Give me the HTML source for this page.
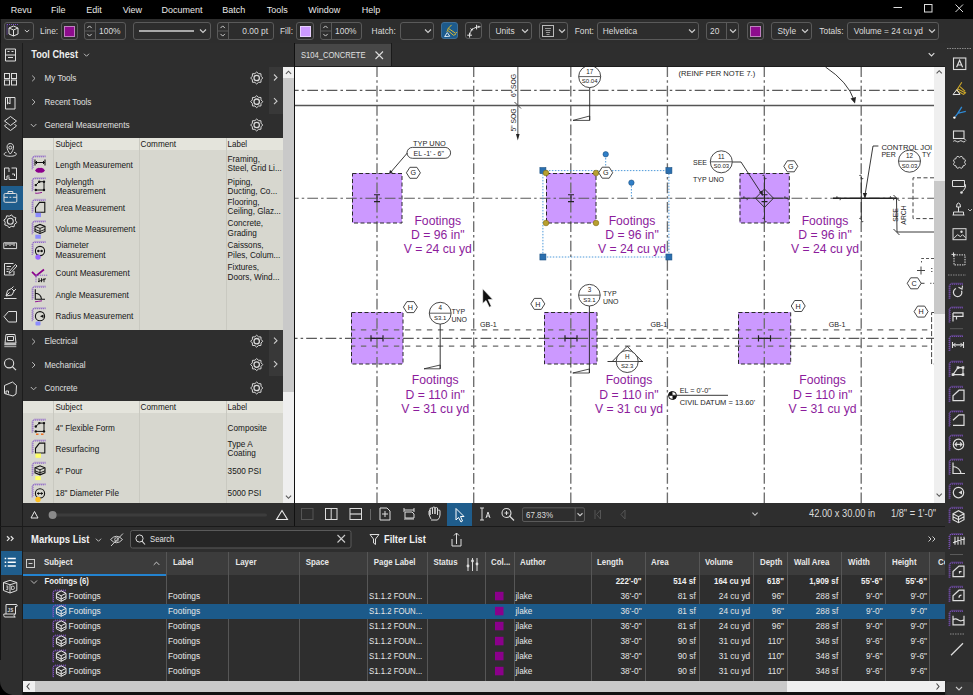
<!DOCTYPE html><html><head><meta charset="utf-8"><style>
*{margin:0;padding:0;box-sizing:border-box}
html,body{width:973px;height:695px;overflow:hidden;background:#000;font-family:"Liberation Sans",sans-serif}
.a{position:absolute}
.t{position:absolute;white-space:nowrap;line-height:1}
svg{overflow:visible}
</style></head><body>
<div class="a" style="left:0px;top:0px;width:973px;height:19px;background:#000;"></div>
<svg class="a" style="left:880px;top:0px;" width="93" height="19" viewBox="880 0 93 19"><path d="M893.5 7.5H902" stroke="#ddd" stroke-width="1"/><rect x="924.5" y="4.5" width="7.5" height="7.5" fill="none" stroke="#ddd" stroke-width="1"/><path d="M955.5 4.5L963 12M963 4.5L955.5 12" stroke="#ddd" stroke-width="1"/></svg>
<div class="a" style="left:0px;top:19px;width:973px;height:24px;background:#2d2d2d;"></div>
<div class="a" style="left:0px;top:19px;width:1px;height:24px;background:#111;"></div>
<div class="a" style="left:3.5px;top:22px;width:30.0px;height:18px;border:1px solid #5a5a5a;background:transparent;border-radius:3px;"></div>
<svg class="a" style="left:5px;top:22px;" width="28" height="18" viewBox="5 22 28 18"><path d="M7 24.5V35M7 24.5H19" stroke="#7b4fc9" stroke-width="1" stroke-dasharray="1 1"/><path d="M9 28L13.5 26L18 28V34L13.5 36L9 34Z M9 28L13.5 30L18 28 M13.5 30V36" fill="none" stroke="#e0e0e0" stroke-width="1"/><path d="M24.8 29.9L27 32.1L29.2 29.9" fill="none" stroke="#d0d0d0" stroke-width="1"/></svg>
<div class="a" style="left:60.5px;top:22px;width:17.0px;height:18px;border:1px solid #5a5a5a;background:transparent;border-radius:3px;"></div>
<div class="a" style="left:64.5px;top:26.5px;width:9px;height:9px;background:#8e0c8e;outline:1px solid #c080c0"></div>
<div class="a" style="left:84px;top:22px;width:42px;height:18px;border:1px solid #5a5a5a;background:transparent;border-radius:3px;"></div>
<div class="a" style="left:95px;top:22px;width:1px;height:18px;background:#5a5a5a;"></div>
<svg class="a" style="left:84px;top:22px;" width="11" height="18" viewBox="84 22 11 18"><path d="M87.3 28.1L89.5 25.9L91.7 28.1" fill="none" stroke="#ccc" stroke-width="1"/><path d="M87.3 33.9L89.5 36.1L91.7 33.9" fill="none" stroke="#ccc" stroke-width="1"/><path d="M84 31H95" stroke="#5a5a5a"/></svg>
<div class="a" style="left:133px;top:22px;width:77.6px;height:18px;border:1px solid #5a5a5a;background:transparent;border-radius:3px;"></div>
<div class="a" style="left:139px;top:30px;width:55px;height:2px;background:#a8a8a8;"></div>
<svg class="a" style="left:195px;top:22px;" width="15" height="18" viewBox="195 22 15 18"><path d="M200 29.5L203 32.5L206 29.5" fill="none" stroke="#d0d0d0" stroke-width="1.1"/></svg>
<div class="a" style="left:217px;top:22px;width:56.60000000000002px;height:18px;border:1px solid #5a5a5a;background:transparent;border-radius:3px;"></div>
<div class="a" style="left:228.4px;top:22px;width:1px;height:18px;background:#5a5a5a;"></div>
<svg class="a" style="left:217px;top:22px;" width="11.400000000000006" height="18" viewBox="217 22 11.400000000000006 18"><path d="M220.5 28.1L222.7 25.9L224.89999999999998 28.1" fill="none" stroke="#ccc" stroke-width="1"/><path d="M220.5 33.9L222.7 36.1L224.89999999999998 33.9" fill="none" stroke="#ccc" stroke-width="1"/><path d="M217 31H228.4" stroke="#5a5a5a"/></svg>
<div class="a" style="left:296.4px;top:22px;width:17.30000000000001px;height:18px;border:1px solid #5a5a5a;background:transparent;border-radius:3px;"></div>
<div class="a" style="left:300.5px;top:26.5px;width:9px;height:9px;background:#cc99ff;outline:1px solid #e8d0ff"></div>
<div class="a" style="left:320.3px;top:22px;width:41.39999999999998px;height:18px;border:1px solid #5a5a5a;background:transparent;border-radius:3px;"></div>
<div class="a" style="left:331.3px;top:22px;width:1px;height:18px;background:#5a5a5a;"></div>
<svg class="a" style="left:320.3px;top:22px;" width="11.0" height="18" viewBox="320.3 22 11.0 18"><path d="M323.6 28.1L325.8 25.9L328.0 28.1" fill="none" stroke="#ccc" stroke-width="1"/><path d="M323.6 33.9L325.8 36.1L328.0 33.9" fill="none" stroke="#ccc" stroke-width="1"/><path d="M320.3 31H331.3" stroke="#5a5a5a"/></svg>
<div class="a" style="left:399.6px;top:22px;width:34.69999999999999px;height:18px;border:1px solid #5a5a5a;background:transparent;border-radius:3px;"></div>
<svg class="a" style="left:420px;top:22px;" width="14" height="18" viewBox="420 22 14 18"><path d="M425 29.5L428 32.5L431 29.5" fill="none" stroke="#d0d0d0" stroke-width="1.1"/></svg>
<div class="a" style="left:441.2px;top:22.2px;width:17.0px;height:17.2px;border:1px solid #3f6f98;background:#1c5a8c;border-radius:3px;"></div>
<svg class="a" style="left:441px;top:22px;" width="17" height="18" viewBox="441 22 17 18"><path d="M451.6 24.9L448.3 28.3L447.6 30.3L453.5 35.3L455.8 34.3 M448.3 28.3L455.6 33.3L457 32.2 M447.6 30.3L446.8 31.8" fill="none" stroke="#d9b834" stroke-width="1"/><path d="M444.6 36.6L447.3 32.6L449.8 36.2Z" fill="none" stroke="#d8e8f5" stroke-width="1"/></svg>
<div class="a" style="left:465.1px;top:22.2px;width:16.799999999999955px;height:17.2px;border:1px solid #5a5a5a;background:transparent;border-radius:3px;"></div>
<svg class="a" style="left:465px;top:22px;" width="17" height="18" viewBox="465 22 17 18"><path d="M469.6 35.2Q470.3 29.2 476.5 27.1L480.5 26.7" fill="none" stroke="#dcdcdc" stroke-width="1"/><path d="M467.2 35.2H472 M469.6 32.8V37.6 M470.6 28.4L472.6 30.4 M472.6 28.4L470.6 30.4 M476.6 24.8V29.4 M478.8 25.8V27.8" stroke="#e8e8e8" stroke-width="1"/></svg>
<div class="a" style="left:488.9px;top:22px;width:42.700000000000045px;height:18px;border:1px solid #5a5a5a;background:transparent;border-radius:3px;"></div>
<svg class="a" style="left:518px;top:22px;" width="14" height="18" viewBox="518 22 14 18"><path d="M522 29.5L525 32.5L528 29.5" fill="none" stroke="#d0d0d0" stroke-width="1.1"/></svg>
<div class="a" style="left:538.5px;top:22px;width:29.700000000000045px;height:18px;border:1px solid #5a5a5a;background:transparent;border-radius:3px;"></div>
<svg class="a" style="left:538px;top:22px;" width="30" height="18" viewBox="538 22 30 18"><rect x="542.5" y="25.5" width="11" height="11" fill="none" stroke="#bbb" stroke-width="1"/><path d="M545 28.5H551M545.5 30.5H550.5M546 32.5H550M546.5 34.5H549.5" stroke="#999" stroke-width="1.2"/><path d="M559 29.5L562 32.5L565 29.5" fill="none" stroke="#d0d0d0" stroke-width="1.1"/></svg>
<div class="a" style="left:597.3px;top:22px;width:101.40000000000009px;height:18px;border:1px solid #5a5a5a;background:transparent;border-radius:3px;"></div>
<svg class="a" style="left:685px;top:22px;" width="14" height="18" viewBox="685 22 14 18"><path d="M689 29.5L692 32.5L695 29.5" fill="none" stroke="#d0d0d0" stroke-width="1.1"/></svg>
<div class="a" style="left:706.3px;top:22px;width:33.200000000000045px;height:18px;border:1px solid #5a5a5a;background:transparent;border-radius:3px;"></div>
<div class="a" style="left:726.4px;top:22px;width:1px;height:18px;background:#5a5a5a;"></div>
<svg class="a" style="left:726px;top:22px;" width="14" height="18" viewBox="726 22 14 18"><path d="M730 29.5L733 32.5L736 29.5" fill="none" stroke="#d0d0d0" stroke-width="1.1"/></svg>
<div class="a" style="left:747.3px;top:22px;width:16.700000000000045px;height:18px;border:1px solid #5a5a5a;background:transparent;border-radius:3px;"></div>
<div class="a" style="left:751.2px;top:26.5px;width:9px;height:9px;background:#8e0c8e;outline:1px solid #c080c0"></div>
<div class="a" style="left:770.8px;top:22px;width:41.10000000000002px;height:18px;border:1px solid #5a5a5a;background:transparent;border-radius:3px;"></div>
<svg class="a" style="left:798px;top:22px;" width="14" height="18" viewBox="798 22 14 18"><path d="M802 29.5L805 32.5L808 29.5" fill="none" stroke="#d0d0d0" stroke-width="1.1"/></svg>
<div class="a" style="left:847px;top:22px;width:92.29999999999995px;height:18px;border:1px solid #5a5a5a;background:transparent;border-radius:3px;"></div>
<svg class="a" style="left:925px;top:22px;" width="14" height="18" viewBox="925 22 14 18"><path d="M929 29.5L932 32.5L935 29.5" fill="none" stroke="#d0d0d0" stroke-width="1.1"/></svg>
<div class="a" style="left:0px;top:43px;width:973px;height:1px;background:#141414;"></div>
<div class="a" style="left:23px;top:43px;width:272px;height:483px;background:#2e2e2e;"></div>
<div class="a" style="left:22px;top:43px;width:1px;height:652px;background:#1c1c1c;"></div>
<div class="a" style="left:294px;top:43px;width:1px;height:483px;background:#111;"></div>
<div class="a" style="left:269px;top:67px;width:14px;height:46.6px;background:#383838;"></div>
<div class="a" style="left:269px;top:330px;width:14px;height:46.4px;background:#383838;"></div>
<svg class="a" style="left:23px;top:43px;" width="272" height="460" viewBox="23 43 272 460"><path d="M84.0 53.75L86.5 56.25L89.0 53.75" fill="none" stroke="#bbb" stroke-width="1"/><path d="M32.2 75.60000000000001L35.0 78.4L32.2 81.2" fill="none" stroke="#bbb" stroke-width="1"/><path d="M262.70 78.00L261.04 79.80L260.94 82.24L258.50 82.34L256.70 84.00L254.90 82.34L252.46 82.24L252.36 79.80L250.70 78.00L252.36 76.20L252.46 73.76L254.90 73.66L256.70 72.00L258.50 73.66L260.94 73.76L261.04 76.20Z" fill="none" stroke="#d8d8d8" stroke-width="1"/><circle cx="256.7" cy="78" r="2.70" fill="none" stroke="#d8d8d8" stroke-width="1.3"/><path d="M274.0 74.5L277.0 77.5L274.0 80.5" fill="none" stroke="#ccc" stroke-width="1.1"/><path d="M32.2 99.30000000000001L35.0 102.10000000000001L32.2 104.9" fill="none" stroke="#bbb" stroke-width="1"/><path d="M262.70 101.70L261.04 103.50L260.94 105.94L258.50 106.04L256.70 107.70L254.90 106.04L252.46 105.94L252.36 103.50L250.70 101.70L252.36 99.90L252.46 97.46L254.90 97.36L256.70 95.70L258.50 97.36L260.94 97.46L261.04 99.90Z" fill="none" stroke="#d8d8d8" stroke-width="1"/><circle cx="256.7" cy="101.7" r="2.70" fill="none" stroke="#d8d8d8" stroke-width="1.3"/><path d="M274.0 98.2L277.0 101.2L274.0 104.2" fill="none" stroke="#ccc" stroke-width="1.1"/><path d="M30.8 124.0L33.6 126.80000000000001L36.4 124.0" fill="none" stroke="#bbb" stroke-width="1"/><path d="M262.70 125.00L261.04 126.80L260.94 129.24L258.50 129.34L256.70 131.00L254.90 129.34L252.46 129.24L252.36 126.80L250.70 125.00L252.36 123.20L252.46 120.76L254.90 120.66L256.70 119.00L258.50 120.66L260.94 120.76L261.04 123.20Z" fill="none" stroke="#d8d8d8" stroke-width="1"/><circle cx="256.7" cy="125" r="2.70" fill="none" stroke="#d8d8d8" stroke-width="1.3"/><path d="M32.2 338.79999999999995L35.0 341.59999999999997L32.2 344.4" fill="none" stroke="#bbb" stroke-width="1"/><path d="M262.70 341.20L261.04 343.00L260.94 345.44L258.50 345.54L256.70 347.20L254.90 345.54L252.46 345.44L252.36 343.00L250.70 341.20L252.36 339.40L252.46 336.96L254.90 336.86L256.70 335.20L258.50 336.86L260.94 336.96L261.04 339.40Z" fill="none" stroke="#d8d8d8" stroke-width="1"/><circle cx="256.7" cy="341.2" r="2.70" fill="none" stroke="#d8d8d8" stroke-width="1.3"/><path d="M274.0 337.7L277.0 340.7L274.0 343.7" fill="none" stroke="#ccc" stroke-width="1.1"/><path d="M32.2 362.2L35.0 365.0L32.2 367.8" fill="none" stroke="#bbb" stroke-width="1"/><path d="M262.70 364.60L261.04 366.40L260.94 368.84L258.50 368.94L256.70 370.60L254.90 368.94L252.46 368.84L252.36 366.40L250.70 364.60L252.36 362.80L252.46 360.36L254.90 360.26L256.70 358.60L258.50 360.26L260.94 360.36L261.04 362.80Z" fill="none" stroke="#d8d8d8" stroke-width="1"/><circle cx="256.7" cy="364.6" r="2.70" fill="none" stroke="#d8d8d8" stroke-width="1.3"/><path d="M274.0 361.1L277.0 364.1L274.0 367.1" fill="none" stroke="#ccc" stroke-width="1.1"/><path d="M30.8 387.0L33.6 389.79999999999995L36.4 387.0" fill="none" stroke="#bbb" stroke-width="1"/><path d="M262.70 388.00L261.04 389.80L260.94 392.24L258.50 392.34L256.70 394.00L254.90 392.34L252.46 392.24L252.36 389.80L250.70 388.00L252.36 386.20L252.46 383.76L254.90 383.66L256.70 382.00L258.50 383.66L260.94 383.76L261.04 386.20Z" fill="none" stroke="#d8d8d8" stroke-width="1"/><circle cx="256.7" cy="388" r="2.70" fill="none" stroke="#d8d8d8" stroke-width="1.3"/></svg>
<div class="a" style="left:23px;top:137.6px;width:260px;height:12.400000000000006px;background:#e4e4dc;"></div>
<div class="a" style="left:23px;top:150px;width:260px;height:179.60000000000002px;background:#d7d7cf;"></div>
<div class="a" style="left:53px;top:137.6px;width:1px;height:192.00000000000003px;background:#c9c9c1;"></div>
<div class="a" style="left:138.5px;top:137.6px;width:1px;height:192.00000000000003px;background:#c9c9c1;"></div>
<div class="a" style="left:225.5px;top:137.6px;width:1px;height:192.00000000000003px;background:#c9c9c1;"></div>
<div class="a" style="left:23px;top:400.8px;width:260px;height:12.300000000000011px;background:#e4e4dc;"></div>
<div class="a" style="left:23px;top:413.1px;width:260px;height:89.89999999999998px;background:#d7d7cf;"></div>
<div class="a" style="left:53px;top:400.8px;width:1px;height:102.19999999999999px;background:#c9c9c1;"></div>
<div class="a" style="left:138.5px;top:400.8px;width:1px;height:102.19999999999999px;background:#c9c9c1;"></div>
<div class="a" style="left:225.5px;top:400.8px;width:1px;height:102.19999999999999px;background:#c9c9c1;"></div>
<svg class="a" style="left:23px;top:137px;" width="260" height="366" viewBox="23 137 260 366"><path d="M33 156.8H45.5 M33 156.8V168.8" stroke="#8455c8" stroke-width="0.9" fill="none" stroke-dasharray="1.2 0.8"/><path d="M35 155.3V156.8M37 155.3V156.8M39 155.3V156.8M41 155.3V156.8M43 155.3V156.8M45 155.3V156.8M31.5 158.8H33M31.5 160.8H33M31.5 162.8H33M31.5 164.8H33M31.5 166.8H33M31.5 168.8H33" stroke="#8455c8" stroke-width="0.7" fill="none"/><path d="M35 162.5H45 M35 159.5V165.5 M45 159.5V165.5" stroke="#111" stroke-width="1.1" fill="none"/><path d="M37 161.0L35.5 162.5L37 164.0 M43 161.0L44.5 162.5L43 164.0" stroke="#111" stroke-width="1" fill="none"/><path d="M35 170.5Q37 167.0 40 168.0Q43 167.0 45 170.5Q43 173.5 40 172.5Q37 173.5 35 170.5Z" fill="#8b008b"/><path d="M33 178.70000000000002H45.5 M33 178.70000000000002V190.70000000000002" stroke="#8455c8" stroke-width="0.9" fill="none" stroke-dasharray="1.2 0.8"/><path d="M35 177.20000000000002V178.70000000000002M37 177.20000000000002V178.70000000000002M39 177.20000000000002V178.70000000000002M41 177.20000000000002V178.70000000000002M43 177.20000000000002V178.70000000000002M45 177.20000000000002V178.70000000000002M31.5 180.70000000000002H33M31.5 182.70000000000002H33M31.5 184.70000000000002H33M31.5 186.70000000000002H33M31.5 188.70000000000002H33M31.5 190.70000000000002H33" stroke="#8455c8" stroke-width="0.7" fill="none"/><path d="M35.8 185.1L39.3 181.70000000000002L44 181.70000000000002L44 190.0L35.8 190.0" fill="none" stroke="#111" stroke-width="1"/><circle cx="35.8" cy="185.1" r="1.2" fill="#111"/><circle cx="39.3" cy="181.70000000000002" r="1.2" fill="#111"/><circle cx="44" cy="181.70000000000002" r="1.2" fill="#111"/><circle cx="44" cy="190.0" r="1.2" fill="#111"/><circle cx="35.8" cy="190.0" r="1.2" fill="#111"/><path d="M35 192.9Q36 193.9 42 192.4" fill="none" stroke="#8b008b" stroke-width="0.9"/><path d="M33 200.3H45.5 M33 200.3V212.3" stroke="#8455c8" stroke-width="0.9" fill="none" stroke-dasharray="1.2 0.8"/><path d="M35 198.8V200.3M37 198.8V200.3M39 198.8V200.3M41 198.8V200.3M43 198.8V200.3M45 198.8V200.3M31.5 202.3H33M31.5 204.3H33M31.5 206.3H33M31.5 208.3H33M31.5 210.3H33M31.5 212.3H33" stroke="#8455c8" stroke-width="0.7" fill="none"/><path d="M35.5 212.3V207.6L39.5 202.4H44.8V212.3Z" fill="none" stroke="#111" stroke-width="1.1"/><rect x="35.5" y="212.8" width="5.5" height="4.3" fill="#8c8cff"/><path d="M33 221.8H45.5 M33 221.8V233.8" stroke="#8455c8" stroke-width="0.9" fill="none" stroke-dasharray="1.2 0.8"/><path d="M35 220.3V221.8M37 220.3V221.8M39 220.3V221.8M41 220.3V221.8M43 220.3V221.8M45 220.3V221.8M31.5 223.8H33M31.5 225.8H33M31.5 227.8H33M31.5 229.8H33M31.5 231.8H33M31.5 233.8H33" stroke="#8455c8" stroke-width="0.7" fill="none"/><path d="M35 226.4L40 224.4L45 226.4V231.4L40 233.4L35 231.4Z" fill="none" stroke="#111" stroke-width="1.1"/><path d="M35 226.4L40 228.4L45 226.4 M40 228.4V233.4 M35 229.4L40 231.4L45 229.4" fill="none" stroke="#111" stroke-width="0.9"/><rect x="35.3" y="234.7" width="5.5" height="4" fill="#8c8cff"/><path d="M33 242.4H45.5 M33 242.4V254.4" stroke="#8455c8" stroke-width="0.9" fill="none" stroke-dasharray="1.2 0.8"/><path d="M35 240.9V242.4M37 240.9V242.4M39 240.9V242.4M41 240.9V242.4M43 240.9V242.4M45 240.9V242.4M31.5 244.4H33M31.5 246.4H33M31.5 248.4H33M31.5 250.4H33M31.5 252.4H33M31.5 254.4H33" stroke="#8455c8" stroke-width="0.7" fill="none"/><circle cx="40" cy="251.0" r="4.6" fill="none" stroke="#111" stroke-width="1.1"/><path d="M37 251.0H43" stroke="#111" stroke-width="1"/><path d="M39 249.5L37 251.0L39 252.5Z M41 249.5L43 251.0L41 252.5Z" fill="#111"/><circle cx="38" cy="257.1" r="2.7" fill="#9966ff"/><path d="M32 271.9L36 275.9L44 269.5" fill="none" stroke="#8b008b" stroke-width="1.7"/><path d="M36 275.2H48 M36 275.2V282.2" stroke="#8455c8" stroke-width="0.9" stroke-dasharray="1.2 0.8"/><path d="M39 278.2V282.2 M41.5 278.2V282.2 M44 278.2V282.2 M38 281.7L46 278.7" stroke="#111" stroke-width="0.9"/><path d="M33 287.1H45.5 M33 287.1V299.1" stroke="#8455c8" stroke-width="0.9" fill="none" stroke-dasharray="1.2 0.8"/><path d="M35 285.6V287.1M37 285.6V287.1M39 285.6V287.1M41 285.6V287.1M43 285.6V287.1M45 285.6V287.1M31.5 289.1H33M31.5 291.1H33M31.5 293.1H33M31.5 295.1H33M31.5 297.1H33M31.5 299.1H33" stroke="#8455c8" stroke-width="0.7" fill="none"/><path d="M35.3 289.3V299.3H45 M35.3 293.3Q41 293.8 41.5 299.3" fill="none" stroke="#111" stroke-width="1.1"/><path d="M35 301.8Q39 301.3 42 300.8" fill="none" stroke="#8b008b" stroke-width="0.9"/><path d="M33 308.7H45.5 M33 308.7V320.7" stroke="#8455c8" stroke-width="0.9" fill="none" stroke-dasharray="1.2 0.8"/><path d="M35 307.2V308.7M37 307.2V308.7M39 307.2V308.7M41 307.2V308.7M43 307.2V308.7M45 307.2V308.7M31.5 310.7H33M31.5 312.7H33M31.5 314.7H33M31.5 316.7H33M31.5 318.7H33M31.5 320.7H33" stroke="#8455c8" stroke-width="0.7" fill="none"/><circle cx="40" cy="316.2" r="4.6" fill="none" stroke="#111" stroke-width="1.1"/><path d="M40 316.2L43.5 314.4V318.0Z" fill="#111"/><rect x="35.5" y="321.4" width="5" height="4" rx="1" fill="#8c8cff"/><path d="M33 420.1H45.5 M33 420.1V432.1" stroke="#8455c8" stroke-width="0.9" fill="none" stroke-dasharray="1.2 0.8"/><path d="M35 418.6V420.1M37 418.6V420.1M39 418.6V420.1M41 418.6V420.1M43 418.6V420.1M45 418.6V420.1M31.5 422.1H33M31.5 424.1H33M31.5 426.1H33M31.5 428.1H33M31.5 430.1H33M31.5 432.1H33" stroke="#8455c8" stroke-width="0.7" fill="none"/><path d="M35.8 426.5L39.3 423.1L44 423.1L44 431.40000000000003L35.8 431.40000000000003" fill="none" stroke="#111" stroke-width="1"/><circle cx="35.8" cy="426.5" r="1.2" fill="#111"/><circle cx="39.3" cy="423.1" r="1.2" fill="#111"/><circle cx="44" cy="423.1" r="1.2" fill="#111"/><circle cx="44" cy="431.40000000000003" r="1.2" fill="#111"/><circle cx="35.8" cy="431.40000000000003" r="1.2" fill="#111"/><path d="M36 434.3H38.5 M41 434.3H43.5" stroke="#f07020" stroke-width="1.6"/><path d="M33 441.0H45.5 M33 441.0V453.0" stroke="#8455c8" stroke-width="0.9" fill="none" stroke-dasharray="1.2 0.8"/><path d="M35 439.5V441.0M37 439.5V441.0M39 439.5V441.0M41 439.5V441.0M43 439.5V441.0M45 439.5V441.0M31.5 443.0H33M31.5 445.0H33M31.5 447.0H33M31.5 449.0H33M31.5 451.0H33M31.5 453.0H33" stroke="#8455c8" stroke-width="0.7" fill="none"/><path d="M35.5 453.0V448.3L39.5 443.09999999999997H44.8V453.0Z" fill="none" stroke="#111" stroke-width="1.1"/><rect x="35.5" y="453.5" width="5.5" height="4.3" fill="#ffff66"/><path d="M33 463.2H45.5 M33 463.2V475.2" stroke="#8455c8" stroke-width="0.9" fill="none" stroke-dasharray="1.2 0.8"/><path d="M35 461.7V463.2M37 461.7V463.2M39 461.7V463.2M41 461.7V463.2M43 461.7V463.2M45 461.7V463.2M31.5 465.2H33M31.5 467.2H33M31.5 469.2H33M31.5 471.2H33M31.5 473.2H33M31.5 475.2H33" stroke="#8455c8" stroke-width="0.7" fill="none"/><path d="M35 467.79999999999995L40 465.79999999999995L45 467.79999999999995V472.79999999999995L40 474.79999999999995L35 472.79999999999995Z" fill="none" stroke="#111" stroke-width="1.1"/><path d="M35 467.79999999999995L40 469.79999999999995L45 467.79999999999995 M40 469.79999999999995V474.79999999999995 M35 470.79999999999995L40 472.79999999999995L45 470.79999999999995" fill="none" stroke="#111" stroke-width="0.9"/><rect x="35.3" y="476.09999999999997" width="5.5" height="4" fill="#ffff66"/><path d="M33 484.8H45.5 M33 484.8V496.8" stroke="#8455c8" stroke-width="0.9" fill="none" stroke-dasharray="1.2 0.8"/><path d="M35 483.3V484.8M37 483.3V484.8M39 483.3V484.8M41 483.3V484.8M43 483.3V484.8M45 483.3V484.8M31.5 486.8H33M31.5 488.8H33M31.5 490.8H33M31.5 492.8H33M31.5 494.8H33M31.5 496.8H33" stroke="#8455c8" stroke-width="0.7" fill="none"/><circle cx="40" cy="493.4" r="4.6" fill="none" stroke="#111" stroke-width="1.1"/><path d="M37 493.4H43" stroke="#111" stroke-width="1"/><path d="M39 491.9L37 493.4L39 494.9Z M41 491.9L43 493.4L41 494.9Z" fill="#111"/><circle cx="38" cy="499.5" r="2.7" fill="#ffc020"/></svg>
<div class="a" style="left:283px;top:67px;width:11px;height:436px;background:#efefef;"></div>
<div class="a" style="left:283px;top:78px;width:11px;height:314px;background:#c9c9c9;"></div>
<svg class="a" style="left:283px;top:67px;" width="11" height="436" viewBox="283 67 11 436"><path d="M285.9 73.8L288.5 71.2L291.1 73.8" fill="none" stroke="#555" stroke-width="1.1"/><path d="M285.9 495.7L288.5 498.3L291.1 495.7" fill="none" stroke="#555" stroke-width="1.1"/></svg>
<svg class="a" style="left:23px;top:503px;" width="272" height="23" viewBox="23 503 272 23"><path d="M34.5 511.5L38 518H31Z" fill="none" stroke="#e8e8e8" stroke-width="1"/><rect x="52" y="513.5" width="215" height="3" rx="1.5" fill="#3c3c3c"/><circle cx="52.6" cy="515" r="4" fill="#8a8a8a"/><path d="M282 510.5L287.5 519.5H276.5Z" fill="none" stroke="#e8e8e8" stroke-width="1.1"/></svg>
<svg class="a" style="left:295px;top:67px;background:#fff;overflow:hidden" width="639" height="436" viewBox="295 67 639 436" font-family="Liberation Sans"><rect x="352" y="173" width="50" height="50" fill="#cc99ff"/><rect x="546" y="173" width="50" height="50" fill="#cc99ff"/><rect x="739.5" y="173" width="49.799999999999955" height="50" fill="#cc99ff"/><rect x="351" y="312" width="52" height="52" fill="#cc99ff"/><rect x="544" y="312" width="53" height="52" fill="#cc99ff"/><rect x="738" y="312" width="52.700000000000045" height="52" fill="#cc99ff"/><path d="M377 67V503" fill="none" stroke="#6e6e6e" stroke-width="1.35" stroke-dasharray="10.7 3.1 2.5 3.07" stroke-dashoffset="0.67"/><path d="M473.7 67V503" fill="none" stroke="#6e6e6e" stroke-width="1.35" stroke-dasharray="10.7 3.1 2.5 3.07" stroke-dashoffset="0.67"/><path d="M570.8 67V503" fill="none" stroke="#6e6e6e" stroke-width="1.35" stroke-dasharray="10.7 3.1 2.5 3.07" stroke-dashoffset="0.67"/><path d="M667.4 67V503" fill="none" stroke="#6e6e6e" stroke-width="1.35" stroke-dasharray="10.7 3.1 2.5 3.07" stroke-dashoffset="0.67"/><path d="M764.3 67V503" fill="none" stroke="#6e6e6e" stroke-width="1.35" stroke-dasharray="10.7 3.1 2.5 3.07" stroke-dashoffset="0.67"/><path d="M861.2 67V503" fill="none" stroke="#6e6e6e" stroke-width="1.35" stroke-dasharray="10.7 3.1 2.5 3.07" stroke-dashoffset="0.67"/><path d="M295 90.4H934" fill="none" stroke="#5a5a5a" stroke-width="1.15" stroke-dasharray="10.7 3.1 2.5 3.07" stroke-dashoffset="7.07"/><path d="M295 198.2H934" fill="none" stroke="#5a5a5a" stroke-width="1.15" stroke-dasharray="10.7 3.1 2.5 3.07" stroke-dashoffset="7.07"/><path d="M295 338.4H934" fill="none" stroke="#5a5a5a" stroke-width="1.15" stroke-dasharray="10.7 3.1 2.5 3.07" stroke-dashoffset="8.17"/><path d="M295 105.5H934" fill="none" stroke="#555" stroke-width="1.3"/><path d="M351 329.8H931.6" fill="none" stroke="#6a6a6a" stroke-width="1.3" stroke-dasharray="5.4 5.6" stroke-dashoffset="1.1"/><path d="M351 346.2H931.6" fill="none" stroke="#6a6a6a" stroke-width="1.3" stroke-dasharray="5.4 5.6" stroke-dashoffset="1.1"/><path d="M764.5 177V220 M741 198.2H788 M861.3 177V220" fill="none" stroke="#333" stroke-width="1"/><rect x="352.5" y="173.5" width="49.5" height="49.5" fill="none" stroke="#2a2a2a" stroke-width="1" stroke-dasharray="4 2.5"/><rect x="546.5" y="173.5" width="49.5" height="49.5" fill="none" stroke="#2a2a2a" stroke-width="1" stroke-dasharray="4 2.5"/><rect x="740.0" y="173.5" width="49.299999999999955" height="49.5" fill="none" stroke="#2a2a2a" stroke-width="1" stroke-dasharray="4 2.5"/><rect x="351.5" y="312.5" width="51.5" height="51.5" fill="none" stroke="#2a2a2a" stroke-width="1" stroke-dasharray="4 2.5"/><rect x="544.5" y="312.5" width="52.5" height="51.5" fill="none" stroke="#2a2a2a" stroke-width="1" stroke-dasharray="4 2.5"/><rect x="738.5" y="312.5" width="52.200000000000045" height="51.5" fill="none" stroke="#2a2a2a" stroke-width="1" stroke-dasharray="4 2.5"/><path d="M374 194.79999999999998H380 M374 201.6H380 M377 194.79999999999998V201.6" fill="none" stroke="#222" stroke-width="1.1"/><path d="M568 194.79999999999998H574 M568 201.6H574 M571 194.79999999999998V201.6" fill="none" stroke="#222" stroke-width="1.1"/><path d="M761.5 194.79999999999998H767.5 M761.5 201.6H767.5 M764.5 194.79999999999998V201.6" fill="none" stroke="#222" stroke-width="1.1"/><path d="M371 335.2V341.59999999999997 M383 335.2V341.59999999999997 M371 338.4H383" fill="none" stroke="#222" stroke-width="1.2"/><path d="M565 335.2V341.59999999999997 M577 335.2V341.59999999999997 M565 338.4H577" fill="none" stroke="#222" stroke-width="1.2"/><path d="M758.5 335.2V341.59999999999997 M770.5 335.2V341.59999999999997 M758.5 338.4H770.5" fill="none" stroke="#222" stroke-width="1.2"/><path d="M764.5 189L773.5 198.2L764.5 207.4L755.5 198.2Z" fill="none" stroke="#333" stroke-width="1"/><path d="M589.7 87.6V120.4" fill="none" stroke="#222" stroke-width="0.9"/><path d="M573 120.4L589.7 116V120.4Z" fill="none" stroke="#222" stroke-width="0.8"/><circle cx="589.7" cy="76.6" r="11" fill="#fff" stroke="#333" stroke-width="0.9"/><path d="M578.7 76.6H600.7" fill="none" stroke="#333" stroke-width="0.8"/><text x="589.7" y="73.6" font-size="6.3" text-anchor="middle" fill="#222">17</text><text x="589.7" y="82.89999999999999" font-size="6" text-anchor="middle" fill="#222">S0.04</text><path d="M517.8 67V136" fill="none" stroke="#777" stroke-width="1.3"/><path d="M516 134L517.8 140.5L519.6 134Z" fill="#222"/><path d="M514.5 102L521 108.5" fill="none" stroke="#333" stroke-width="0.9"/><text x="0" y="0" font-size="6.8" text-anchor="middle" fill="#1e1e1e" transform="translate(515.5 85.5) rotate(-90)">6&quot; SOG</text><text x="0" y="0" font-size="6.8" text-anchor="middle" fill="#1e1e1e" transform="translate(515.5 120) rotate(-90)">5&quot; SOG</text><text x="678.5" y="76.3" font-size="7.55" text-anchor="start" fill="#1e1e1e">(REINF PER NOTE 7.)</text><path d="M825.5 67Q848 82 854 100" fill="none" stroke="#222" stroke-width="0.9"/><path d="M850.5 98.5L855 103.5L856 97Z" fill="#222"/><text x="413" y="146" font-size="7.4" text-anchor="start" fill="#1e1e1e">TYP UNO</text><rect x="407" y="147.4" width="43.6" height="10.9" rx="5.45" fill="#fff" stroke="#333" stroke-width="0.9"/><text x="428.8" y="155.6" font-size="7" text-anchor="middle" fill="#1e1e1e">EL -1' - 6&quot;</text><path d="M407.3 153L390.5 172.5" fill="none" stroke="#222" stroke-width="0.9"/><path d="M389 174L390 170L392.8 172.3Z" fill="#222"/><text x="693" y="164.5" font-size="7" text-anchor="start" fill="#1e1e1e">SEE</text><text x="693" y="181.5" font-size="7" text-anchor="start" fill="#1e1e1e">TYP UNO</text><path d="M732.3 162H741L761.5 193.5" fill="none" stroke="#222" stroke-width="0.9"/><path d="M759 192L763 196L762.5 190.5Z" fill="#222"/><circle cx="721.3" cy="161.8" r="11" fill="#fff" stroke="#333" stroke-width="0.9"/><path d="M710.3 161.8H732.3" fill="none" stroke="#333" stroke-width="0.8"/><text x="721.3" y="158.8" font-size="6.3" text-anchor="middle" fill="#222">11</text><text x="721.3" y="168.10000000000002" font-size="6" text-anchor="middle" fill="#222">S0.03</text><text x="881.4" y="149.5" font-size="7.6" text-anchor="start" fill="#1e1e1e">CONTROL JOI</text><text x="881.4" y="157" font-size="7" text-anchor="start" fill="#1e1e1e">PER</text><text x="922" y="157" font-size="7" text-anchor="start" fill="#1e1e1e">TY</text><path d="M878.4 146H873L865 195" fill="none" stroke="#222" stroke-width="0.9"/><path d="M862.8 193L865 199L867 193Z" fill="#222"/><circle cx="909.5" cy="161.2" r="11" fill="#fff" stroke="#333" stroke-width="0.9"/><path d="M898.5 161.2H920.5" fill="none" stroke="#333" stroke-width="0.8"/><text x="909.5" y="158.2" font-size="6.3" text-anchor="middle" fill="#222">12</text><text x="909.5" y="167.5" font-size="6" text-anchor="middle" fill="#222">S0.03</text><path d="M833 198.2H896.5" fill="none" stroke="#222" stroke-width="1.6"/><text x="0" y="0" font-size="6.8" text-anchor="middle" fill="#1e1e1e" transform="translate(898 215) rotate(-90)">SEE</text><text x="0" y="0" font-size="6.8" text-anchor="middle" fill="#1e1e1e" transform="translate(905.5 215) rotate(-90)">ARCH</text><path d="M896.5 198.2L897 232H934" fill="none" stroke="#222" stroke-width="0.9"/><path d="M893.5 195L899.5 201 M893.5 229L899.5 235" fill="none" stroke="#222" stroke-width="0.9"/><path d="M934 177.8H913V218.6H934" fill="none" stroke="#444" stroke-width="1" stroke-dasharray="4 2.5"/><path d="M934 258.5H921.5V262.5" fill="none" stroke="#444" stroke-width="0.9" stroke-dasharray="3 2"/><path d="M917 270.5H925 M921 266.5V274.5 M921 283.3H924.5" fill="none" stroke="#444" stroke-width="1"/><path d="M931 268.5H934 M931 271.5H934 M930 283.3H934" fill="none" stroke="#555" stroke-width="0.9" stroke-dasharray="1.5 1.5"/><path d="M934 312.5H931.6V364H934" fill="none" stroke="#444" stroke-width="1" stroke-dasharray="5 2"/><path d="M744.0 196.2Q742.5 198.2 745.5 198.2T747.0 200.2" fill="none" stroke="#333" stroke-width="0.9"/><path d="M785.0 196.2Q783.5 198.2 786.5 198.2T788.0 200.2" fill="none" stroke="#333" stroke-width="0.9"/><path d="M762.5 175.5Q764.5 174 764.5 177T766.5 178.5" fill="none" stroke="#333" stroke-width="0.9"/><path d="M762.5 218.5Q764.5 217 764.5 220T766.5 221.5" fill="none" stroke="#333" stroke-width="0.9"/><path d="M837.0 196.2Q835.5 198.2 838.5 198.2T840.0 200.2" fill="none" stroke="#333" stroke-width="0.9"/><path d="M859.3 175.5Q861.3 174 861.3 177T863.3 178.5" fill="none" stroke="#333" stroke-width="0.9"/><path d="M859.3 218.5Q861.3 217 861.3 220T863.3 221.5" fill="none" stroke="#333" stroke-width="0.9"/><path d="M890.5 196.2Q889 198.2 892 198.2T893.5 200.2" fill="none" stroke="#333" stroke-width="0.9"/><text x="437.8" y="224.6" font-size="12.2" text-anchor="middle" fill="#8c1c9c">Footings</text><text x="437.8" y="238.7" font-size="12.2" text-anchor="middle" fill="#8c1c9c">D = 96 in&quot;</text><text x="437.8" y="252.5" font-size="12.2" text-anchor="middle" fill="#8c1c9c">V = 24 cu yd</text><text x="632" y="224.6" font-size="12.2" text-anchor="middle" fill="#8c1c9c">Footings</text><text x="632" y="238.7" font-size="12.2" text-anchor="middle" fill="#8c1c9c">D = 96 in&quot;</text><text x="632" y="252.5" font-size="12.2" text-anchor="middle" fill="#8c1c9c">V = 24 cu yd</text><text x="825" y="224.6" font-size="12.2" text-anchor="middle" fill="#8c1c9c">Footings</text><text x="825" y="238.7" font-size="12.2" text-anchor="middle" fill="#8c1c9c">D = 96 in&quot;</text><text x="825" y="252.5" font-size="12.2" text-anchor="middle" fill="#8c1c9c">V = 24 cu yd</text><text x="435.2" y="384.1" font-size="12.2" text-anchor="middle" fill="#8c1c9c">Footings</text><text x="435.2" y="398.6" font-size="12.2" text-anchor="middle" fill="#8c1c9c">D = 110 in&quot;</text><text x="435.2" y="412.8" font-size="12.2" text-anchor="middle" fill="#8c1c9c">V = 31 cu yd</text><text x="629" y="384.1" font-size="12.2" text-anchor="middle" fill="#8c1c9c">Footings</text><text x="629" y="398.6" font-size="12.2" text-anchor="middle" fill="#8c1c9c">D = 110 in&quot;</text><text x="629" y="412.8" font-size="12.2" text-anchor="middle" fill="#8c1c9c">V = 31 cu yd</text><text x="822.6" y="384.1" font-size="12.2" text-anchor="middle" fill="#8c1c9c">Footings</text><text x="822.6" y="398.6" font-size="12.2" text-anchor="middle" fill="#8c1c9c">D = 110 in&quot;</text><text x="822.6" y="412.8" font-size="12.2" text-anchor="middle" fill="#8c1c9c">V = 31 cu yd</text><path d="M440.2 323V368.8" fill="none" stroke="#222" stroke-width="0.9"/><path d="M424 368.8L440.2 365V368.8Z" fill="none" stroke="#222" stroke-width="0.8"/><circle cx="440.2" cy="313.2" r="10.9" fill="#fff" stroke="#333" stroke-width="0.9"/><path d="M429.3 313.2H451.09999999999997" fill="none" stroke="#333" stroke-width="0.8"/><text x="440.2" y="310.2" font-size="6.3" text-anchor="middle" fill="#222">4</text><text x="440.2" y="319.5" font-size="6" text-anchor="middle" fill="#222">S3.1</text><text x="451.5" y="313.5" font-size="7" text-anchor="start" fill="#1e1e1e">TYP</text><text x="451.5" y="321.5" font-size="7" text-anchor="start" fill="#1e1e1e">UNO</text><path d="M589.4 306V373" fill="none" stroke="#222" stroke-width="0.9"/><path d="M572.8 373L589.4 369V373Z" fill="none" stroke="#222" stroke-width="0.8"/><circle cx="589.4" cy="295.2" r="10.8" fill="#fff" stroke="#333" stroke-width="0.9"/><path d="M578.6 295.2H600.1999999999999" fill="none" stroke="#333" stroke-width="0.8"/><text x="589.4" y="292.2" font-size="6.3" text-anchor="middle" fill="#222">3</text><text x="589.4" y="301.5" font-size="6" text-anchor="middle" fill="#222">S3.1</text><text x="603" y="296" font-size="7" text-anchor="start" fill="#1e1e1e">TYP</text><text x="603" y="304.3" font-size="7" text-anchor="start" fill="#1e1e1e">UNO</text><path d="M607.5 361.5H643 M612.2 361.5L627.2 346.3L642.3 361.5" fill="none" stroke="#222" stroke-width="0.9"/><circle cx="627.2" cy="361.5" r="11" fill="#fff" stroke="#333" stroke-width="0.9"/><path d="M616.2 361.5H638.2" fill="none" stroke="#333" stroke-width="0.8"/><text x="627.2" y="358.5" font-size="6.3" text-anchor="middle" fill="#222">H</text><text x="627.2" y="367.8" font-size="6" text-anchor="middle" fill="#222">S2.3</text><text x="480" y="326.5" font-size="7.2" text-anchor="start" fill="#1e1e1e">GB-1</text><text x="650.4" y="326.5" font-size="7.2" text-anchor="start" fill="#1e1e1e">GB-1</text><text x="828.7" y="326.5" font-size="7.2" text-anchor="start" fill="#1e1e1e">GB-1</text><circle cx="672.5" cy="395.5" r="4" fill="#fff" stroke="#111" stroke-width="1"/><path d="M668.5 395.5A4 4 0 0 1 672.5 391.5V399.5A4 4 0 0 0 676.5 395.5H672.5Z" fill="#111"/><text x="679.7" y="393.2" font-size="7.2" text-anchor="start" fill="#1e1e1e">EL = 0'-0&quot;</text><path d="M668 395.3H728" fill="none" stroke="#222" stroke-width="0.9"/><text x="679.7" y="404.5" font-size="7.5" text-anchor="start" fill="#1e1e1e">CIVIL DATUM = 13.60'</text><path d="M542.9 170.6H668.9V257H542.9Z" fill="none" stroke="#3b8fd6" stroke-width="0.9" stroke-dasharray="1.5 1.5"/><path d="M605.7 155V171 M631.4 183V198" fill="none" stroke="#3b8fd6" stroke-width="0.9" stroke-dasharray="1.5 1.5"/><rect x="539.9" y="167.6" width="6" height="6" fill="#2a6fb0" stroke="#1b4f80" stroke-width="0.6"/><rect x="665.9" y="167.6" width="6" height="6" fill="#2a6fb0" stroke="#1b4f80" stroke-width="0.6"/><rect x="539.9" y="254" width="6" height="6" fill="#2a6fb0" stroke="#1b4f80" stroke-width="0.6"/><rect x="665.9" y="254" width="6" height="6" fill="#2a6fb0" stroke="#1b4f80" stroke-width="0.6"/><circle cx="546" cy="173" r="2.8" fill="#b8a030" stroke="#806a10" stroke-width="0.6"/><circle cx="596" cy="173" r="2.8" fill="#b8a030" stroke="#806a10" stroke-width="0.6"/><circle cx="546" cy="223" r="2.8" fill="#b8a030" stroke="#806a10" stroke-width="0.6"/><circle cx="596" cy="223" r="2.8" fill="#b8a030" stroke="#806a10" stroke-width="0.6"/><circle cx="605.7" cy="154.3" r="2.7" fill="#2f7fc8" stroke="#1b4f80" stroke-width="0.6"/><circle cx="631.4" cy="182.7" r="2.7" fill="#2f7fc8" stroke="#1b4f80" stroke-width="0.6"/><path d="M406.4 172.8L409.9 167.3H416.9L420.4 172.8L416.9 178.3H409.9Z" fill="#fff" stroke="#333" stroke-width="0.9"/><text x="413.4" y="175.4" font-size="7.2" text-anchor="middle" fill="#222">G</text><path d="M598.7 172.7L602.2 167.2H609.2L612.7 172.7L609.2 178.2H602.2Z" fill="#fff" stroke="#333" stroke-width="0.9"/><text x="605.7" y="175.29999999999998" font-size="7.2" text-anchor="middle" fill="#222">G</text><path d="M783.8 166.3L787.3 160.8H794.3L797.8 166.3L794.3 171.8H787.3Z" fill="#fff" stroke="#333" stroke-width="0.9"/><text x="790.8" y="168.9" font-size="7.2" text-anchor="middle" fill="#222">G</text><path d="M403.4 307.1L406.9 301.6H413.9L417.4 307.1L413.9 312.6H406.9Z" fill="#fff" stroke="#333" stroke-width="0.9"/><text x="410.4" y="309.70000000000005" font-size="7.2" text-anchor="middle" fill="#222">H</text><path d="M530.8 303.9L534.3 298.4H541.3L544.8 303.9L541.3 309.4H534.3Z" fill="#fff" stroke="#333" stroke-width="0.9"/><text x="537.8" y="306.5" font-size="7.2" text-anchor="middle" fill="#222">H</text><path d="M791.2 306L794.7 300.5H801.7L805.2 306L801.7 311.5H794.7Z" fill="#fff" stroke="#333" stroke-width="0.9"/><text x="798.2" y="308.6" font-size="7.2" text-anchor="middle" fill="#222">H</text><path d="M914.1 311.6L917.6 306.1H924.6L928.1 311.6L924.6 317.1H917.6Z" fill="#fff" stroke="#333" stroke-width="0.9"/><text x="921.1" y="314.20000000000005" font-size="7.2" text-anchor="middle" fill="#222">H</text><path d="M907.2 283.3L910.7 277.8H917.7L921.2 283.3L917.7 288.8H910.7Z" fill="#fff" stroke="#333" stroke-width="0.9"/><text x="914.2" y="285.90000000000003" font-size="7.2" text-anchor="middle" fill="#222">C</text><path d="M482.7 288.8V303.5L486 300.5L489.3 307.2L491.3 306.2L488.2 299.6H492.8Z" fill="#111" stroke="#fff" stroke-width="0.6"/></svg>
<div class="a" style="left:295px;top:43px;width:650px;height:24px;background:#2e2e2e;"></div>
<div class="a" style="left:295px;top:43.5px;width:96px;height:23.5px;background:#474747;"></div>
<div class="a" style="left:391px;top:43px;width:1px;height:24px;background:#1a1a1a;"></div>
<div class="a" style="left:295px;top:66px;width:650px;height:1px;background:#1c1c1c;"></div>
<svg class="a" style="left:370px;top:50px;" width="16" height="16" viewBox="370 50 16 16"><path d="M375.5 51.5L383 59M383 51.5L375.5 59" stroke="#ddd" stroke-width="1.1"/></svg>
<svg class="a" style="left:925px;top:48px;" width="14" height="12" viewBox="925 48 14 12"><path d="M928.7 53.1L931.5 55.9L934.3 53.1" fill="none" stroke="#ddd" stroke-width="1.1"/></svg>
<div class="a" style="left:934px;top:67px;width:10.5px;height:436px;background:#efefef;"></div>
<div class="a" style="left:934px;top:181px;width:10.5px;height:133px;background:#c9c9c9;"></div>
<svg class="a" style="left:934px;top:67px;" width="11" height="436" viewBox="934 67 11 436"><path d="M936.6 73.3L939.2 70.7L941.8000000000001 73.3" fill="none" stroke="#555" stroke-width="1.1"/><path d="M936.6 493.7L939.2 496.3L941.8000000000001 493.7" fill="none" stroke="#555" stroke-width="1.1"/></svg>
<div class="a" style="left:944.5px;top:67px;width:0.5px;height:436px;background:#2e2e2e;"></div>
<div class="a" style="left:295px;top:503px;width:650px;height:23px;background:#2e2e2e;"></div>
<div class="a" style="left:447px;top:503px;width:24.5px;height:23px;background:#1f5d8c"></div>
<svg class="a" style="left:295px;top:503px;" width="650" height="23" viewBox="295 503 650 23"><rect x="301.5" y="508.5" width="11.5" height="11" fill="none" stroke="#555" stroke-width="1"/><rect x="325.5" y="508.5" width="11.5" height="11" fill="none" stroke="#dcdcdc" stroke-width="1"/><path d="M331.2 508.5V519.5" fill="none" stroke="#dcdcdc" stroke-width="1"/><rect x="350" y="508.5" width="11.5" height="11" fill="none" stroke="#dcdcdc" stroke-width="1"/><path d="M350 514H361.5" fill="none" stroke="#dcdcdc" stroke-width="1.2"/><path d="M370.5 509V520" fill="none" stroke="#666" stroke-width="1"/><path d="M380 508H387L390 511V520H380Z M382 514H388 M385 511V517" fill="none" stroke="#dcdcdc" stroke-width="1"/><path d="M404 510H414 M404 508V512 M414 508V512 M404 519H414 M405 512H412L414 514V518H405Z" fill="none" stroke="#dcdcdc" stroke-width="1"/><path d="M431 519Q428 514 429 511L430 510V515 M430 515V508.5Q431.5 507.5 432.5 508.5V514 M432.5 514V507.5Q434 506.5 435 507.5V514 M435 514V508Q436.5 507 437.5 508V515 M437.5 515V510.5Q439 509.5 440 510.5V515Q440 518 437.5 520H431" fill="none" stroke="#dcdcdc" stroke-width="1"/><path d="M456 508.5V520L458.5 517.5L461 522L462.5 521L460.5 516.5H464Z" fill="none" stroke="#fff" stroke-width="1"/><path d="M480 508H484 M482 508V520 M480 520H484 M486 518L488 512L490 518 M487 516H489" fill="none" stroke="#dcdcdc" stroke-width="1"/><circle cx="506.5" cy="513" r="4.5" fill="none" stroke="#dcdcdc" stroke-width="1.1"/><path d="M509.5 516L514 520.5" fill="none" stroke="#dcdcdc" stroke-width="1.3"/><path d="M504.5 513H508.5 M506.5 511V515" fill="none" stroke="#dcdcdc" stroke-width="1"/><rect x="522.5" y="507.8" width="62" height="13.7" rx="1.5" fill="none" stroke="#5a5a5a" stroke-width="1"/><path d="M575.2 508V521.5" fill="none" stroke="#5a5a5a" stroke-width="1"/><path d="M577.5 513.25L580 515.75L582.5 513.25" fill="none" stroke="#ccc" stroke-width="1.1"/><path d="M595 510V519 M600.5 510L596.5 514.5L600.5 519Z" fill="none" stroke="#555" stroke-width="1"/><path d="M625 510L621 514.5L625 519Z" fill="none" stroke="#555" stroke-width="1"/><rect x="750" y="503" width="10" height="23" fill="#333"/><path d="M752.4 512.7L755 515.3L757.6 512.7" fill="none" stroke="#ccc" stroke-width="1.1"/></svg>
<div class="a" style="left:0px;top:526px;width:945px;height:1px;background:#1a1a1a;"></div>
<div class="a" style="left:23px;top:527px;width:922px;height:168px;background:#2e2e2e;"></div>
<svg class="a" style="left:23px;top:527px;" width="922" height="25" viewBox="23 527 922 25"><path d="M95.9 538.7L98.5 541.3L101.1 538.7" fill="none" stroke="#bbb" stroke-width="1"/><path d="M110.5 539.5Q116.5 533 122.5 539.5Q116.5 546 110.5 539.5Z" fill="none" stroke="#ccc" stroke-width="1"/><circle cx="116.5" cy="539.5" r="1.8" fill="none" stroke="#ccc"/><path d="M111 546L123 533.5" fill="none" stroke="#ccc" stroke-width="1"/><rect x="130.5" y="530.5" width="220.5" height="17.5" rx="2" fill="#262626" stroke="#5a5a5a" stroke-width="1"/><circle cx="139.5" cy="538.5" r="3.6" fill="none" stroke="#ddd" stroke-width="1"/><path d="M142 541.2L145 544.5" fill="none" stroke="#ddd" stroke-width="1.1"/><path d="M337.5 535L345 542.5 M345 535L337.5 542.5" fill="none" stroke="#ccc" stroke-width="1.1"/><path d="M370 534.5H379L375.5 539V544.5L373.5 543V539Z" fill="none" stroke="#ddd" stroke-width="1"/><path d="M452 539V546H461V539 M456.5 544V533 M454 535.5L456.5 533L459 535.5" fill="none" stroke="#ddd" stroke-width="1"/><path d="M928.5 536.5L931 539L928.5 541.5 M932.5 536.5L935 539L932.5 541.5" fill="none" stroke="#ccc" stroke-width="1"/></svg>
<div class="a" style="left:23px;top:551.6px;width:922px;height:23.4px;background:#3c3c3c;"></div>
<div class="a" style="left:166.2px;top:551.6px;width:1px;height:129px;background:#565656;"></div>
<div class="a" style="left:228.4px;top:551.6px;width:1px;height:129px;background:#565656;"></div>
<div class="a" style="left:299.4px;top:551.6px;width:1px;height:129px;background:#565656;"></div>
<div class="a" style="left:367.1px;top:551.6px;width:1px;height:129px;background:#565656;"></div>
<div class="a" style="left:427.2px;top:551.6px;width:1px;height:129px;background:#565656;"></div>
<div class="a" style="left:484.7px;top:551.6px;width:1px;height:129px;background:#565656;"></div>
<div class="a" style="left:513.5px;top:551.6px;width:1px;height:129px;background:#565656;"></div>
<div class="a" style="left:590.6px;top:551.6px;width:1px;height:129px;background:#565656;"></div>
<div class="a" style="left:644.5px;top:551.6px;width:1px;height:129px;background:#565656;"></div>
<div class="a" style="left:699.3px;top:551.6px;width:1px;height:129px;background:#565656;"></div>
<div class="a" style="left:753.4px;top:551.6px;width:1px;height:129px;background:#565656;"></div>
<div class="a" style="left:787.4px;top:551.6px;width:1px;height:129px;background:#565656;"></div>
<div class="a" style="left:841.3px;top:551.6px;width:1px;height:129px;background:#565656;"></div>
<div class="a" style="left:884.9px;top:551.6px;width:1px;height:129px;background:#565656;"></div>
<div class="a" style="left:929.1px;top:551.6px;width:1px;height:129px;background:#565656;"></div>
<div class="a" style="left:23px;top:574px;width:143.2px;height:2px;background:#2383d0;"></div>
<svg class="a" style="left:23px;top:551px;" width="922" height="25" viewBox="23 551 922 25"><rect x="26.5" y="559.5" width="8" height="8" fill="none" stroke="#ccc" stroke-width="1"/><path d="M28.5 563.5H32.5" fill="none" stroke="#ccc" stroke-width="1"/><path d="M153.7 564.9L156.5 562.1L159.3 564.9" fill="none" stroke="#ccc" stroke-width="1"/><path d="M468 558V571 M472.5 558V571 M477 558V571" fill="none" stroke="#ddd" stroke-width="1"/><circle cx="468" cy="566" r="1.4" fill="#ddd"/><circle cx="472.5" cy="561" r="1.4" fill="#ddd"/><circle cx="477" cy="564" r="1.4" fill="#ddd"/></svg>
<div class="a" style="left:23px;top:604px;width:922px;height:15px;background:#1c5a8a;"></div>
<svg class="a" style="left:23px;top:575px;" width="922" height="106" viewBox="23 575 922 106"><path d="M31 580.5L34 583.5L37 580.5" fill="none" stroke="#bbb" stroke-width="1"/><rect x="495" y="591.8" width="8.5" height="8.5" fill="#8b008b"/><path d="M53.5 591.0H66.0 M53.5 591.0V602.5" stroke="#8455c8" stroke-width="0.9" fill="none" stroke-dasharray="1.2 0.8"/><path d="M55.5 589.5V591.0M57.5 589.5V591.0M59.5 589.5V591.0M61.5 589.5V591.0M63.5 589.5V591.0M65.5 589.5V591.0M52.0 593.0H53.5M52.0 595.0H53.5M52.0 597.0H53.5M52.0 599.0H53.5M52.0 601.0H53.5" stroke="#8455c8" stroke-width="0.7" fill="none"/><path d="M56.400000000000006 593.3L61.2 590.8L66.0 593.3V598.8L61.2 601.3L56.400000000000006 598.8Z M56.400000000000006 593.3L61.2 595.8L66.0 593.3 M61.2 595.8V601.3 M56.400000000000006 596.5999999999999L61.2 599.0999999999999L66.0 596.5999999999999" fill="none" stroke="#e8e8e8" stroke-width="1"/><rect x="495" y="606.8" width="8.5" height="8.5" fill="#8b008b"/><path d="M53.5 606.0H66.0 M53.5 606.0V617.5" stroke="#8455c8" stroke-width="0.9" fill="none" stroke-dasharray="1.2 0.8"/><path d="M55.5 604.5V606.0M57.5 604.5V606.0M59.5 604.5V606.0M61.5 604.5V606.0M63.5 604.5V606.0M65.5 604.5V606.0M52.0 608.0H53.5M52.0 610.0H53.5M52.0 612.0H53.5M52.0 614.0H53.5M52.0 616.0H53.5" stroke="#8455c8" stroke-width="0.7" fill="none"/><path d="M56.400000000000006 608.3L61.2 605.8L66.0 608.3V613.8L61.2 616.3L56.400000000000006 613.8Z M56.400000000000006 608.3L61.2 610.8L66.0 608.3 M61.2 610.8V616.3 M56.400000000000006 611.5999999999999L61.2 614.0999999999999L66.0 611.5999999999999" fill="none" stroke="#e8e8e8" stroke-width="1"/><rect x="495" y="621.8" width="8.5" height="8.5" fill="#8b008b"/><path d="M53.5 621.0H66.0 M53.5 621.0V632.5" stroke="#8455c8" stroke-width="0.9" fill="none" stroke-dasharray="1.2 0.8"/><path d="M55.5 619.5V621.0M57.5 619.5V621.0M59.5 619.5V621.0M61.5 619.5V621.0M63.5 619.5V621.0M65.5 619.5V621.0M52.0 623.0H53.5M52.0 625.0H53.5M52.0 627.0H53.5M52.0 629.0H53.5M52.0 631.0H53.5" stroke="#8455c8" stroke-width="0.7" fill="none"/><path d="M56.400000000000006 623.3L61.2 620.8L66.0 623.3V628.8L61.2 631.3L56.400000000000006 628.8Z M56.400000000000006 623.3L61.2 625.8L66.0 623.3 M61.2 625.8V631.3 M56.400000000000006 626.5999999999999L61.2 629.0999999999999L66.0 626.5999999999999" fill="none" stroke="#e8e8e8" stroke-width="1"/><rect x="495" y="636.8" width="8.5" height="8.5" fill="#8b008b"/><path d="M53.5 636.0H66.0 M53.5 636.0V647.5" stroke="#8455c8" stroke-width="0.9" fill="none" stroke-dasharray="1.2 0.8"/><path d="M55.5 634.5V636.0M57.5 634.5V636.0M59.5 634.5V636.0M61.5 634.5V636.0M63.5 634.5V636.0M65.5 634.5V636.0M52.0 638.0H53.5M52.0 640.0H53.5M52.0 642.0H53.5M52.0 644.0H53.5M52.0 646.0H53.5" stroke="#8455c8" stroke-width="0.7" fill="none"/><path d="M56.400000000000006 638.3L61.2 635.8L66.0 638.3V643.8L61.2 646.3L56.400000000000006 643.8Z M56.400000000000006 638.3L61.2 640.8L66.0 638.3 M61.2 640.8V646.3 M56.400000000000006 641.5999999999999L61.2 644.0999999999999L66.0 641.5999999999999" fill="none" stroke="#e8e8e8" stroke-width="1"/><rect x="495" y="651.8" width="8.5" height="8.5" fill="#8b008b"/><path d="M53.5 651.0H66.0 M53.5 651.0V662.5" stroke="#8455c8" stroke-width="0.9" fill="none" stroke-dasharray="1.2 0.8"/><path d="M55.5 649.5V651.0M57.5 649.5V651.0M59.5 649.5V651.0M61.5 649.5V651.0M63.5 649.5V651.0M65.5 649.5V651.0M52.0 653.0H53.5M52.0 655.0H53.5M52.0 657.0H53.5M52.0 659.0H53.5M52.0 661.0H53.5" stroke="#8455c8" stroke-width="0.7" fill="none"/><path d="M56.400000000000006 653.3L61.2 650.8L66.0 653.3V658.8L61.2 661.3L56.400000000000006 658.8Z M56.400000000000006 653.3L61.2 655.8L66.0 653.3 M61.2 655.8V661.3 M56.400000000000006 656.5999999999999L61.2 659.0999999999999L66.0 656.5999999999999" fill="none" stroke="#e8e8e8" stroke-width="1"/><rect x="495" y="666.8" width="8.5" height="8.5" fill="#8b008b"/><path d="M53.5 666.0H66.0 M53.5 666.0V677.5" stroke="#8455c8" stroke-width="0.9" fill="none" stroke-dasharray="1.2 0.8"/><path d="M55.5 664.5V666.0M57.5 664.5V666.0M59.5 664.5V666.0M61.5 664.5V666.0M63.5 664.5V666.0M65.5 664.5V666.0M52.0 668.0H53.5M52.0 670.0H53.5M52.0 672.0H53.5M52.0 674.0H53.5M52.0 676.0H53.5" stroke="#8455c8" stroke-width="0.7" fill="none"/><path d="M56.400000000000006 668.3L61.2 665.8L66.0 668.3V673.8L61.2 676.3L56.400000000000006 673.8Z M56.400000000000006 668.3L61.2 670.8L66.0 668.3 M61.2 670.8V676.3 M56.400000000000006 671.5999999999999L61.2 674.0999999999999L66.0 671.5999999999999" fill="none" stroke="#e8e8e8" stroke-width="1"/></svg>
<div class="a" style="left:23px;top:681px;width:922px;height:11px;background:#efefef;"></div>
<div class="a" style="left:35px;top:681px;width:752px;height:11px;background:#c9c9c9;"></div>
<svg class="a" style="left:23px;top:681px;" width="922" height="11" viewBox="23 681 922 11"><path d="M29.5 683.5L27 686.5L29.5 689.5" fill="none" stroke="#444" stroke-width="1.1"/><path d="M936.5 683.5L939 686.5L936.5 689.5" fill="none" stroke="#444" stroke-width="1.1"/></svg>
<div class="a" style="left:23px;top:692px;width:922px;height:3px;background:#111;"></div>
<div class="a" style="left:945px;top:681px;width:28px;height:14px;background:#2e2e2e;"></div>
<div class="a" style="left:0px;top:43px;width:22px;height:652px;background:#2e2e2e;"></div>
<div class="a" style="left:0px;top:43px;width:1px;height:652px;background:#141414;"></div>
<div class="a" style="left:0px;top:526px;width:22px;height:1px;background:#1a1a1a;"></div>
<div class="a" style="left:1px;top:186px;width:21.5px;height:24px;background:#1f5d8c;"></div>
<div class="a" style="left:1px;top:551px;width:21px;height:24px;background:#1f5d8c;"></div>
<svg class="a" style="left:0px;top:43px;" width="22" height="652" viewBox="0 43 22 652"><path d="M5.5 49H15.5V61H5.5Z M5.5 55H15.5" fill="none" stroke="#dedede" stroke-width="1"/><path d="M7.5 51.5H9.5 M11.5 51.5H13.5 M8 57.5H13" fill="none" stroke="#dedede" stroke-width="1.1"/><rect x="4.5" y="73.5" width="5" height="5" fill="none" stroke="#dedede" stroke-width="1"/><rect x="11.5" y="73.5" width="5" height="5" fill="none" stroke="#dedede" stroke-width="1"/><rect x="4.5" y="80" width="5" height="5" fill="none" stroke="#dedede" stroke-width="1"/><rect x="11.5" y="80" width="5" height="5" fill="none" stroke="#dedede" stroke-width="1"/><path d="M5.5 97.5H15V109H5.5Z M7.5 97.5V104L8.8 102.8L10 104V97.5" fill="none" stroke="#dedede" stroke-width="1"/><path d="M10.5 116.5L16.5 121L10.5 125.5L4.5 121Z M6.5 124L4.5 126L10.5 130.5L16.5 126L14.5 124" fill="none" stroke="#dedede" stroke-width="1"/><path d="M10.3 154C6 149.5 6 143.5 10.3 143.5C14.6 143.5 14.6 149.5 10.3 154Z" fill="none" stroke="#dedede" stroke-width="1"/><circle cx="10.3" cy="147.6" r="1.5" fill="none" stroke="#dedede"/><path d="M6.5 152.3C2.5 153.3 3.5 156.3 10.3 156.3C17 156.3 18 153.3 14 152.3" fill="none" stroke="#dedede" stroke-width="1"/><path d="M4.5 168H9V172 M11.5 168H16.5V179.5H9 M4.5 168V179.5H7V176H9.5 M12 174H14.5V176 M9 179.5V177" fill="none" stroke="#dedede" stroke-width="1"/><rect x="4" y="193.5" width="12.8" height="8.8" rx="1.2" fill="none" stroke="#dedede" stroke-width="1"/><path d="M8 193.5V191.5H12.8V193.5 M4 197.3H8 M9.5 197.3H11.3 M12.8 197.3H16.8" fill="none" stroke="#dedede" stroke-width="1"/><path d="M16.77 222.59L14.62 224.19L13.97 226.79L11.31 226.40L9.01 227.77L7.41 225.62L4.81 224.97L5.20 222.31L3.83 220.01L5.98 218.41L6.63 215.81L9.29 216.20L11.59 214.83L13.19 216.98L15.79 217.63L15.40 220.29Z" fill="none" stroke="#dedede" stroke-width="1"/><circle cx="10.3" cy="221.3" r="3" fill="none" stroke="#dedede" stroke-width="1.1"/><path d="M3.8 242.8H16.6V248.6H3.8Z" fill="none" stroke="#dedede" stroke-width="1"/><path d="M6 243V246 M8 243V245 M10 243V246 M12 243V245 M14 243V246" fill="none" stroke="#dedede" stroke-width="1.1"/><path d="M13.5 263.5H4.5V275H14V271 M6.5 266.5H11 M6.5 269H9.5 M6.5 271.5H8.5" fill="none" stroke="#dedede" stroke-width="1"/><path d="M15.5 264.5L17 266L11 272.5L9 273.3L9.7 271.2Z" fill="none" stroke="#dedede" stroke-width="1"/><path d="M4 298.5H16.5" fill="none" stroke="#dedede" stroke-width="1"/><path d="M6 296L7.5 290.5L11.5 288.5L14 291L12 295Z M6 296L9.5 292.5 M11.5 288.5L13.5 286.5 M14 291L16 289" fill="none" stroke="#dedede" stroke-width="1"/><path d="M4 316.7L8.5 311.5H16.5V322H8.5Z" fill="none" stroke="#dedede" stroke-width="1"/><path d="M5 343L6 334.5H15L16 343Z M7.5 336.5H13.5V340.5H7.5Z" fill="none" stroke="#dedede" stroke-width="1"/><rect x="4.3" y="343.3" width="12" height="1.6" fill="#d0d0d0"/><rect x="4.3" y="345.6" width="12" height="1.6" fill="#a0a0a0"/><circle cx="9.1" cy="363.3" r="4.6" fill="none" stroke="#dedede" stroke-width="1.1"/><path d="M12.4 366.6L16 370.2" fill="none" stroke="#dedede" stroke-width="1.2"/><path d="M4.5 385.5L12.5 382L16.5 385.5L16 394L13 396L4.5 393.5Z M6 391V394 M6 391H8.5V393.5" fill="none" stroke="#dedede" stroke-width="1"/><path d="M7 536.3L9.3 538.6L7 540.9 M10.8 536.3L13.1 538.6L10.8 540.9" fill="none" stroke="#dedede" stroke-width="1.3"/><path d="M7.7 558.4H15.8 M7.7 562.2H15.8 M7.7 566H15.8" stroke="#fff" stroke-width="1.5"/><path d="M4.7 558.4H6.2 M4.7 562.2H6.2 M4.7 566H6.2" stroke="#fff" stroke-width="1.5"/><path d="M3.5 582.5L10 580.3L16.8 582.5V590.5L10 593L3.5 590.5Z M3.5 582.5L10 584.8L16.8 582.5 M10 584.8V593" fill="none" stroke="#dedede" stroke-width="1"/><path d="M6.2 586H7.8V589.5H6.2 M6.5 587.8H7.8 M11.5 586.2V589.5H13Q14.5 589.5 14.5 587.8Q14.5 586.2 13 586.2Z" fill="none" stroke="#dedede" stroke-width="0.8"/><path d="M6 614V604.5H16 M16 604.5Q17.5 604.5 17.2 606Q17 607 15.5 606.5 M15.5 606V614 M3.8 614H15.5Q14 614 14 615.8Q14 617 15.3 617H5Q3.8 617 3.8 615.5Z" fill="none" stroke="#dedede" stroke-width="1"/><text x="7.6" y="612" font-size="4.6" font-family="Liberation Sans" font-weight="bold" fill="#dedede">JS</text></svg>
<div class="a" style="left:0;top:670px;width:12px;height:25px;background:#000;border-top-right-radius:0;"></div>
<div class="a" style="left:0;top:660px;width:22px;height:35px;background:#2e2e2e;border-bottom-left-radius:14px;"></div>
<div class="a" style="left:945px;top:43px;width:28px;height:652px;background:#2e2e2e;"></div>
<svg class="a" style="left:945px;top:43px;" width="28" height="652" viewBox="945 43 28 652"><path d="M947 48.5H971" stroke="#8a8a8a" stroke-width="1.2" stroke-dasharray="1.5 1"/><rect x="953.5" y="58" width="12.3" height="11.5" fill="none" stroke="#dedede" stroke-width="1.1"/><path d="M956.6 67.2L959.6 60.2L962.6 67.2 M957.6 65H961.6" fill="none" stroke="#dedede" stroke-width="1.2"/><path d="M961.8 82.3L957.6 88.8L956.6 90.6L963.6 94.4L966 92.3 M957.6 88.8L965 92.8 M960 86.6L965.2 91.3" fill="none" stroke="#d0aa2a" stroke-width="1.1"/><path d="M953 94.6L956.8 89.6L960 94.4Z" fill="none" stroke="#e8e8e8" stroke-width="1"/><path d="M961.8 106.8L957.8 113.3L965.8 111.3 M957.8 113.3L955.3 116.6" fill="none" stroke="#2f8ad6" stroke-width="1.3"/><circle cx="954.4" cy="117.6" r="1.2" fill="#fff"/><rect x="953.5" y="131" width="10.5" height="7.5" fill="none" stroke="#dedede" stroke-width="1.1"/><path d="M953.3 141.3Q954.8 140 956.3 141.3T959.3 141.3T962.3 141.3T965.3 141.3 M964 138.5L966 140.5" fill="none" stroke="#dedede" stroke-width="1"/><path d="M964.50 162.30Q966.89 165.36 963.04 165.84M963.04 165.84Q962.56 169.69 959.50 167.30M959.50 167.30Q956.44 169.69 955.96 165.84M955.96 165.84Q952.11 165.36 954.50 162.30M954.50 162.30Q952.11 159.24 955.96 158.76M955.96 158.76Q956.44 154.91 959.50 157.30M959.50 157.30Q962.56 154.91 963.04 158.76M963.04 158.76Q966.89 159.24 964.50 162.30" fill="none" stroke="#dedede" stroke-width="1"/><path d="M952.5 180.5H964.5V186.5H952.5Z M964.5 183.5Q967.5 186.5 962.5 191.5" fill="none" stroke="#dedede" stroke-width="1"/><circle cx="961.5" cy="192.5" r="1.3" fill="#dedede"/><path d="M952.5 215H964.5 M953.5 215V212H963.5V215 M958.5 212V207 M956.5 207Q956.5 203 958.5 203Q960.5 203 960.5 207Z" fill="none" stroke="#dedede" stroke-width="1"/><path d="M968.0 209.0L970.0 211.0L972.0 209.0" fill="none" stroke="#bbb" stroke-width="1"/><rect x="953.0" y="228.7" width="13" height="11" fill="none" stroke="#dedede"/><path d="M953.5 238.7L957.5 234.7L960.5 236.7L962.5 234.7L965.5 237.7" fill="none" stroke="#dedede" stroke-width="1"/><circle cx="961.5" cy="231.7" r="1.2" fill="#dedede"/><rect x="954.0" y="254.89999999999998" width="11" height="10" fill="none" stroke="#dedede" stroke-dasharray="1.5 1"/><path d="M951.5 254.39999999999998H955.5 M953.5 252.39999999999998V256.4" fill="none" stroke="#dedede" stroke-width="1"/><path d="M948 275H966" stroke="#8a8a8a" stroke-width="1.2" stroke-dasharray="1.5 1"/><path d="M950 284.2H963 M950 284.2V298.7" stroke="#8455c8" stroke-width="0.9" fill="none" stroke-dasharray="1.2 0.8"/><path d="M952 282.7V284.2M954 282.7V284.2M956 282.7V284.2M958 282.7V284.2M960 282.7V284.2M962 282.7V284.2M948.5 286.2H950M948.5 288.2H950M948.5 290.2H950M948.5 292.2H950M948.5 294.2H950M948.5 296.2H950M948.5 298.2H950" stroke="#8455c8" stroke-width="0.8" fill="none"/><path d="M961.5 290.7A4.2 4.2 0 1 1 956 288.5" fill="none" stroke="#dedede" stroke-width="1.2"/><path d="M958.5 287.2L962 289.2L962.5 285.7" fill="none" stroke="#dedede" stroke-width="1.1"/><path d="M950 307.9H963 M950 307.9V322.4" stroke="#8455c8" stroke-width="0.9" fill="none" stroke-dasharray="1.2 0.8"/><path d="M952 306.4V307.9M954 306.4V307.9M956 306.4V307.9M958 306.4V307.9M960 306.4V307.9M962 306.4V307.9M948.5 309.9H950M948.5 311.9H950M948.5 313.9H950M948.5 315.9H950M948.5 317.9H950M948.5 319.9H950M948.5 321.9H950" stroke="#8455c8" stroke-width="0.8" fill="none"/><path d="M953 312.9H963V316.4H953 M953 312.9V321.4 M956.5 316.4V319.4" fill="none" stroke="#dedede" stroke-width="1.2"/><path d="M950 328.7H963" stroke="#5a5a5a" stroke-width="1"/><path d="M950 336.4H963 M950 336.4V350.9" stroke="#8455c8" stroke-width="0.9" fill="none" stroke-dasharray="1.2 0.8"/><path d="M952 334.9V336.4M954 334.9V336.4M956 334.9V336.4M958 334.9V336.4M960 334.9V336.4M962 334.9V336.4M948.5 338.4H950M948.5 340.4H950M948.5 342.4H950M948.5 344.4H950M948.5 346.4H950M948.5 348.4H950M948.5 350.4H950" stroke="#8455c8" stroke-width="0.8" fill="none"/><path d="M953 344.9H963 M952.5 341.9V347.9 M963.5 341.9V347.9" fill="none" stroke="#dedede" stroke-width="1.1"/><path d="M955.5 342.9L953.5 344.9L955.5 346.9 M960.5 342.9L962.5 344.9L960.5 346.9" fill="none" stroke="#dedede" stroke-width="1"/><path d="M950 362.1H963 M950 362.1V376.6" stroke="#8455c8" stroke-width="0.9" fill="none" stroke-dasharray="1.2 0.8"/><path d="M952 360.6V362.1M954 360.6V362.1M956 360.6V362.1M958 360.6V362.1M960 360.6V362.1M962 360.6V362.1M948.5 364.1H950M948.5 366.1H950M948.5 368.1H950M948.5 370.1H950M948.5 372.1H950M948.5 374.1H950M948.5 376.1H950" stroke="#8455c8" stroke-width="0.8" fill="none"/><path d="M953 374.6L958 367.6H963V374.6Z" fill="none" stroke="#dedede" stroke-width="1.1"/><rect x="951.7" y="373.3" width="2.6" height="2.6" fill="#dedede"/><rect x="956.7" y="366.3" width="2.6" height="2.6" fill="#dedede"/><rect x="961.7" y="366.3" width="2.6" height="2.6" fill="#dedede"/><rect x="961.7" y="373.3" width="2.6" height="2.6" fill="#dedede"/><path d="M950 387.2H963 M950 387.2V401.7" stroke="#8455c8" stroke-width="0.9" fill="none" stroke-dasharray="1.2 0.8"/><path d="M952 385.7V387.2M954 385.7V387.2M956 385.7V387.2M958 385.7V387.2M960 385.7V387.2M962 385.7V387.2M948.5 389.2H950M948.5 391.2H950M948.5 393.2H950M948.5 395.2H950M948.5 397.2H950M948.5 399.2H950M948.5 401.2H950" stroke="#8455c8" stroke-width="0.8" fill="none"/><path d="M953 400.7V395.7L959 390.2H964V400.7Z" fill="none" stroke="#dedede" stroke-width="1.2"/><path d="M950 411.8H963 M950 411.8V426.3" stroke="#8455c8" stroke-width="0.9" fill="none" stroke-dasharray="1.2 0.8"/><path d="M952 410.3V411.8M954 410.3V411.8M956 410.3V411.8M958 410.3V411.8M960 410.3V411.8M962 410.3V411.8M948.5 413.8H950M948.5 415.8H950M948.5 417.8H950M948.5 419.8H950M948.5 421.8H950M948.5 423.8H950M948.5 425.8H950" stroke="#8455c8" stroke-width="0.8" fill="none"/><path d="M953 425.3H964V414.8H959L953 420.3" fill="none" stroke="#dedede" stroke-width="1.2"/><path d="M950 435.9H963 M950 435.9V450.4" stroke="#8455c8" stroke-width="0.9" fill="none" stroke-dasharray="1.2 0.8"/><path d="M952 434.4V435.9M954 434.4V435.9M956 434.4V435.9M958 434.4V435.9M960 434.4V435.9M962 434.4V435.9M948.5 437.9H950M948.5 439.9H950M948.5 441.9H950M948.5 443.9H950M948.5 445.9H950M948.5 447.9H950M948.5 449.9H950" stroke="#8455c8" stroke-width="0.8" fill="none"/><circle cx="958.5" cy="444.4" r="5.2" fill="none" stroke="#dedede" stroke-width="1.2"/><path d="M955 444.4H962 M957 442.4L955 444.4L957 446.4 M960 442.4L962 444.4L960 446.4" fill="none" stroke="#dedede" stroke-width="1.1"/><path d="M950 460.0H963 M950 460.0V474.5" stroke="#8455c8" stroke-width="0.9" fill="none" stroke-dasharray="1.2 0.8"/><path d="M952 458.5V460.0M954 458.5V460.0M956 458.5V460.0M958 458.5V460.0M960 458.5V460.0M962 458.5V460.0M948.5 462.0H950M948.5 464.0H950M948.5 466.0H950M948.5 468.0H950M948.5 470.0H950M948.5 472.0H950M948.5 474.0H950" stroke="#8455c8" stroke-width="0.8" fill="none"/><path d="M953 462.5V473.5H965 M953 466.5Q960 467.5 961 473.5" fill="none" stroke="#dedede" stroke-width="1.2"/><path d="M950 484.1H963 M950 484.1V498.6" stroke="#8455c8" stroke-width="0.9" fill="none" stroke-dasharray="1.2 0.8"/><path d="M952 482.6V484.1M954 482.6V484.1M956 482.6V484.1M958 482.6V484.1M960 482.6V484.1M962 482.6V484.1M948.5 486.1H950M948.5 488.1H950M948.5 490.1H950M948.5 492.1H950M948.5 494.1H950M948.5 496.1H950M948.5 498.1H950" stroke="#8455c8" stroke-width="0.8" fill="none"/><circle cx="958.5" cy="492.6" r="5.2" fill="none" stroke="#dedede" stroke-width="1.2"/><path d="M958.5 492.6L962 490.6V494.6Z" fill="#dedede"/><path d="M950 508.20000000000005H963 M950 508.20000000000005V522.7" stroke="#8455c8" stroke-width="0.9" fill="none" stroke-dasharray="1.2 0.8"/><path d="M952 506.70000000000005V508.20000000000005M954 506.70000000000005V508.20000000000005M956 506.70000000000005V508.20000000000005M958 506.70000000000005V508.20000000000005M960 506.70000000000005V508.20000000000005M962 506.70000000000005V508.20000000000005M948.5 510.20000000000005H950M948.5 512.2H950M948.5 514.2H950M948.5 516.2H950M948.5 518.2H950M948.5 520.2H950M948.5 522.2H950" stroke="#8455c8" stroke-width="0.8" fill="none"/><path d="M953 513.7L958.5 510.70000000000005L964 513.7V519.7L958.5 522.7L953 519.7Z M953 513.7L958.5 516.7L964 513.7 M958.5 516.7V522.7 M953 516.7L958.5 519.7L964 516.7" fill="none" stroke="#dedede" stroke-width="1.1"/><path d="M950 534.5H963 M950 534.5V546.8" stroke="#8455c8" stroke-width="0.9" fill="none" stroke-dasharray="1.2 0.8"/><path d="M952 533.0V534.5M954 533.0V534.5M956 533.0V534.5M958 533.0V534.5M960 533.0V534.5M962 533.0V534.5M948.5 536.5H950M948.5 538.5H950M948.5 540.5H950M948.5 542.5H950M948.5 544.5H950M948.5 546.5H950M948.5 548.5H950" stroke="#8455c8" stroke-width="0.8" fill="none"/><path d="M955 536.8V544.8 M958 536.8V544.8 M961 536.8V544.8 M964 536.8V544.8 M953 542.8L965 538.8" fill="none" stroke="#dedede" stroke-width="1.1"/><path d="M950 554.5H963" stroke="#5a5a5a" stroke-width="1"/><path d="M950 563.1H963 M950 563.1V577.6" stroke="#8455c8" stroke-width="0.9" fill="none" stroke-dasharray="1.2 0.8"/><path d="M952 561.6V563.1M954 561.6V563.1M956 561.6V563.1M958 561.6V563.1M960 561.6V563.1M962 561.6V563.1M948.5 565.1H950M948.5 567.1H950M948.5 569.1H950M948.5 571.1H950M948.5 573.1H950M948.5 575.1H950M948.5 577.1H950" stroke="#8455c8" stroke-width="0.8" fill="none"/><path d="M953 576.6V571.6L959 566.1H964V576.6Z M959.5 573.6V571.6H961.5" fill="none" stroke="#dedede" stroke-width="1.2"/><path d="M950 587.2H963 M950 587.2V601.7" stroke="#8455c8" stroke-width="0.9" fill="none" stroke-dasharray="1.2 0.8"/><path d="M952 585.7V587.2M954 585.7V587.2M956 585.7V587.2M958 585.7V587.2M960 585.7V587.2M962 585.7V587.2M948.5 589.2H950M948.5 591.2H950M948.5 593.2H950M948.5 595.2H950M948.5 597.2H950M948.5 599.2H950M948.5 601.2H950" stroke="#8455c8" stroke-width="0.8" fill="none"/><path d="M953 600.7V595.7L959 590.2H964V600.7Z M959 597.7A2.5 2.5 0 0 1 961.5 595.2" fill="none" stroke="#dedede" stroke-width="1.2"/><path d="M950 611.3H963 M950 611.3V625.8" stroke="#8455c8" stroke-width="0.9" fill="none" stroke-dasharray="1.2 0.8"/><path d="M952 609.8V611.3M954 609.8V611.3M956 609.8V611.3M958 609.8V611.3M960 609.8V611.3M962 609.8V611.3M948.5 613.3H950M948.5 615.3H950M948.5 617.3H950M948.5 619.3H950M948.5 621.3H950M948.5 623.3H950M948.5 625.3H950" stroke="#8455c8" stroke-width="0.8" fill="none"/><path d="M953 615.8V624.8H964V615.8 M953 619.8Q955.5 617.8 958 619.8T964 619.8" fill="none" stroke="#dedede" stroke-width="1.2"/><path d="M950 634H965" stroke="#8a8a8a" stroke-width="1.2" stroke-dasharray="1.5 1"/><path d="M951 655.2L963 643.2" fill="none" stroke="#dedede" stroke-width="1.3"/><rect x="946" y="682" width="27" height="13" rx="2" fill="#383838"/><path d="M956 687.0L959 690.0L962 687.0" fill="none" stroke="#ccc" stroke-width="1.1"/></svg>
<svg class="a" style="left:0;top:0" width="973" height="695" font-family="Liberation Sans"><defs><clipPath id="mk"><rect x="23" y="527" width="922" height="168"/></clipPath></defs><text transform="translate(10.70 13) scale(1 1.1)" font-size="9" fill="#e8e8e8" text-anchor="start">Revu</text><text transform="translate(51.00 13) scale(1 1.1)" font-size="9" fill="#e8e8e8" text-anchor="start">File</text><text transform="translate(86.30 13) scale(1 1.1)" font-size="9" fill="#e8e8e8" text-anchor="start">Edit</text><text transform="translate(122.70 13) scale(1 1.1)" font-size="9" fill="#e8e8e8" text-anchor="start">View</text><text transform="translate(161.40 13) scale(1 1.1)" font-size="9" fill="#e8e8e8" text-anchor="start">Document</text><text transform="translate(222.20 13) scale(1 1.1)" font-size="9" fill="#e8e8e8" text-anchor="start">Batch</text><text transform="translate(266.80 13) scale(1 1.1)" font-size="9" fill="#e8e8e8" text-anchor="start">Tools</text><text transform="translate(308.30 13) scale(1 1.1)" font-size="9" fill="#e8e8e8" text-anchor="start">Window</text><text transform="translate(361.80 13) scale(1 1.1)" font-size="9" fill="#e8e8e8" text-anchor="start">Help</text><text transform="translate(40.00 34) scale(1 1.1)" font-size="8.4" fill="#dcdcdc" text-anchor="start">Line:</text><text transform="translate(120.50 34) scale(1 1.1)" font-size="8.4" fill="#dcdcdc" text-anchor="end">100%</text><text transform="translate(268.00 34) scale(1 1.1)" font-size="8.4" fill="#dcdcdc" text-anchor="end">0.00 pt</text><text transform="translate(280.00 34) scale(1 1.1)" font-size="8.4" fill="#dcdcdc" text-anchor="start">Fill:</text><text transform="translate(356.50 34) scale(1 1.1)" font-size="8.4" fill="#dcdcdc" text-anchor="end">100%</text><text transform="translate(371.60 34) scale(1 1.1)" font-size="8.4" fill="#dcdcdc" text-anchor="start">Hatch:</text><text transform="translate(495.50 34) scale(1 1.1)" font-size="8.4" fill="#dcdcdc" text-anchor="start">Units</text><text transform="translate(574.70 34) scale(1 1.1)" font-size="8.4" fill="#dcdcdc" text-anchor="start">Font:</text><text transform="translate(602.70 34) scale(1 1.1)" font-size="8.4" fill="#dcdcdc" text-anchor="start">Helvetica</text><text transform="translate(710.00 34) scale(1 1.1)" font-size="8.4" fill="#dcdcdc" text-anchor="start">20</text><text transform="translate(777.40 34) scale(1 1.1)" font-size="8.4" fill="#dcdcdc" text-anchor="start">Style</text><text transform="translate(819.30 34) scale(1 1.1)" font-size="8.4" fill="#dcdcdc" text-anchor="start">Totals:</text><text transform="translate(853.80 34) scale(1 1.1)" font-size="8.4" fill="#dcdcdc" text-anchor="start">Volume = 24 cu yd</text><text transform="translate(31.20 58) scale(1 1.1)" font-size="9.2" fill="#f0f0f0" text-anchor="start" font-weight="bold">Tool Chest</text><text transform="translate(44.50 81) scale(1 1.1)" font-size="8.15" fill="#e0e0e0" text-anchor="start">My Tools</text><text transform="translate(44.50 105) scale(1 1.1)" font-size="8.15" fill="#e0e0e0" text-anchor="start">Recent Tools</text><text transform="translate(44.50 128) scale(1 1.1)" font-size="8.15" fill="#e0e0e0" text-anchor="start">General Measurements</text><text transform="translate(44.50 344) scale(1 1.1)" font-size="8.15" fill="#e0e0e0" text-anchor="start">Electrical</text><text transform="translate(44.50 368) scale(1 1.1)" font-size="8.15" fill="#e0e0e0" text-anchor="start">Mechanical</text><text transform="translate(44.50 391) scale(1 1.1)" font-size="8.15" fill="#e0e0e0" text-anchor="start">Concrete</text><text transform="translate(55.50 147) scale(1 1.1)" font-size="8.0" fill="#161616" text-anchor="start">Subject</text><text transform="translate(140.60 147) scale(1 1.1)" font-size="8.2" fill="#161616" text-anchor="start">Comment</text><text transform="translate(227.60 147) scale(1 1.1)" font-size="8.0" fill="#161616" text-anchor="start">Label</text><text transform="translate(55.50 168) scale(1 1.1)" font-size="8.2" fill="#161616" text-anchor="start">Length Measurement</text><text transform="translate(227.60 162) scale(1 1.1)" font-size="8.2" fill="#161616" text-anchor="start">Framing,</text><text transform="translate(227.60 171) scale(1 1.1)" font-size="8.2" fill="#161616" text-anchor="start">Steel, Grid Li...</text><text transform="translate(55.50 185) scale(1 1.1)" font-size="8.2" fill="#161616" text-anchor="start">Polylength</text><text transform="translate(55.50 194) scale(1 1.1)" font-size="8.2" fill="#161616" text-anchor="start">Measurement</text><text transform="translate(227.60 185) scale(1 1.1)" font-size="8.2" fill="#161616" text-anchor="start">Piping,</text><text transform="translate(227.60 194) scale(1 1.1)" font-size="8.2" fill="#161616" text-anchor="start">Ducting, Co...</text><text transform="translate(55.50 211) scale(1 1.1)" font-size="8.2" fill="#161616" text-anchor="start">Area Measurement</text><text transform="translate(227.60 205) scale(1 1.1)" font-size="8.2" fill="#161616" text-anchor="start">Flooring,</text><text transform="translate(227.60 214) scale(1 1.1)" font-size="8.2" fill="#161616" text-anchor="start">Ceiling, Glaz...</text><text transform="translate(55.50 232) scale(1 1.1)" font-size="8.2" fill="#161616" text-anchor="start">Volume Measurement</text><text transform="translate(227.60 226) scale(1 1.1)" font-size="8.2" fill="#161616" text-anchor="start">Concrete,</text><text transform="translate(227.60 236) scale(1 1.1)" font-size="8.2" fill="#161616" text-anchor="start">Grading</text><text transform="translate(55.50 248) scale(1 1.1)" font-size="8.2" fill="#161616" text-anchor="start">Diameter</text><text transform="translate(55.50 258) scale(1 1.1)" font-size="8.2" fill="#161616" text-anchor="start">Measurement</text><text transform="translate(227.60 248) scale(1 1.1)" font-size="8.2" fill="#161616" text-anchor="start">Caissons,</text><text transform="translate(227.60 258) scale(1 1.1)" font-size="8.2" fill="#161616" text-anchor="start">Piles, Colum...</text><text transform="translate(55.50 276) scale(1 1.1)" font-size="8.2" fill="#161616" text-anchor="start">Count Measurement</text><text transform="translate(227.60 270) scale(1 1.1)" font-size="8.2" fill="#161616" text-anchor="start">Fixtures,</text><text transform="translate(227.60 280) scale(1 1.1)" font-size="8.2" fill="#161616" text-anchor="start">Doors, Wind...</text><text transform="translate(55.50 298) scale(1 1.1)" font-size="8.2" fill="#161616" text-anchor="start">Angle Measurement</text><text transform="translate(55.50 319) scale(1 1.1)" font-size="8.2" fill="#161616" text-anchor="start">Radius Measurement</text><text transform="translate(55.50 410) scale(1 1.1)" font-size="8.0" fill="#161616" text-anchor="start">Subject</text><text transform="translate(140.60 410) scale(1 1.1)" font-size="8.2" fill="#161616" text-anchor="start">Comment</text><text transform="translate(227.60 410) scale(1 1.1)" font-size="8.0" fill="#161616" text-anchor="start">Label</text><text transform="translate(55.50 431) scale(1 1.1)" font-size="8.2" fill="#161616" text-anchor="start">4&quot; Flexible Form</text><text transform="translate(227.60 431) scale(1 1.1)" font-size="8.2" fill="#161616" text-anchor="start">Composite</text><text transform="translate(55.50 452) scale(1 1.1)" font-size="8.2" fill="#161616" text-anchor="start">Resurfacing</text><text transform="translate(227.60 447) scale(1 1.1)" font-size="8.2" fill="#161616" text-anchor="start">Type A</text><text transform="translate(227.60 456) scale(1 1.1)" font-size="8.2" fill="#161616" text-anchor="start">Coating</text><text transform="translate(55.50 474) scale(1 1.1)" font-size="8.2" fill="#161616" text-anchor="start">4&quot; Pour</text><text transform="translate(227.60 474) scale(1 1.1)" font-size="8.2" fill="#161616" text-anchor="start">3500 PSI</text><text transform="translate(55.50 496) scale(1 1.1)" font-size="8.2" fill="#161616" text-anchor="start">18&quot; Diameter Pile</text><text transform="translate(227.60 496) scale(1 1.1)" font-size="8.2" fill="#161616" text-anchor="start">5000 PSI</text><text transform="translate(301.00 58) scale(1 1.1)" font-size="7.6" fill="#e0e0e0" text-anchor="start">S104_CONCRETE</text><text transform="translate(526.00 518) scale(1 1.1)" font-size="8" fill="#dcdcdc" text-anchor="start">67.83%</text><text transform="translate(809.00 517) scale(1 1.1)" font-size="9.3" fill="#dcdcdc" text-anchor="start">42.00 x 30.00 in</text><text transform="translate(891.00 517) scale(1 1.1)" font-size="9.25" fill="#dcdcdc" text-anchor="start">1/8&quot; = 1'-0&quot;</text><text transform="translate(31.00 543) scale(1 1.1)" font-size="9.5" fill="#f2f2f2" text-anchor="start" font-weight="bold">Markups List</text><text transform="translate(150.00 542) scale(1 1.1)" font-size="7.7" fill="#e6e6e6" text-anchor="start">Search</text><text transform="translate(384.00 543) scale(1 1.1)" font-size="9.3" fill="#f2f2f2" text-anchor="start" font-weight="bold">Filter List</text><g clip-path="url(#mk)"><text transform="translate(44.00 565) scale(1 1.1)" font-size="7.9" fill="#e8e8e8" text-anchor="start" font-weight="bold">Subject</text></g><g clip-path="url(#mk)"><text transform="translate(172.90 565) scale(1 1.1)" font-size="7.9" fill="#e8e8e8" text-anchor="start" font-weight="bold">Label</text></g><g clip-path="url(#mk)"><text transform="translate(235.40 565) scale(1 1.1)" font-size="7.9" fill="#e8e8e8" text-anchor="start" font-weight="bold">Layer</text></g><g clip-path="url(#mk)"><text transform="translate(305.70 565) scale(1 1.1)" font-size="7.9" fill="#e8e8e8" text-anchor="start" font-weight="bold">Space</text></g><g clip-path="url(#mk)"><text transform="translate(373.80 565) scale(1 1.1)" font-size="7.9" fill="#e8e8e8" text-anchor="start" font-weight="bold">Page Label</text></g><g clip-path="url(#mk)"><text transform="translate(433.40 565) scale(1 1.1)" font-size="7.9" fill="#e8e8e8" text-anchor="start" font-weight="bold">Status</text></g><g clip-path="url(#mk)"><text transform="translate(491.00 565) scale(1 1.1)" font-size="7.9" fill="#e8e8e8" text-anchor="start" font-weight="bold">Col...</text></g><g clip-path="url(#mk)"><text transform="translate(520.00 565) scale(1 1.1)" font-size="7.9" fill="#e8e8e8" text-anchor="start" font-weight="bold">Author</text></g><g clip-path="url(#mk)"><text transform="translate(597.00 565) scale(1 1.1)" font-size="7.9" fill="#e8e8e8" text-anchor="start" font-weight="bold">Length</text></g><g clip-path="url(#mk)"><text transform="translate(651.00 565) scale(1 1.1)" font-size="7.9" fill="#e8e8e8" text-anchor="start" font-weight="bold">Area</text></g><g clip-path="url(#mk)"><text transform="translate(705.00 565) scale(1 1.1)" font-size="7.9" fill="#e8e8e8" text-anchor="start" font-weight="bold">Volume</text></g><g clip-path="url(#mk)"><text transform="translate(760.00 565) scale(1 1.1)" font-size="7.9" fill="#e8e8e8" text-anchor="start" font-weight="bold">Depth</text></g><g clip-path="url(#mk)"><text transform="translate(794.00 565) scale(1 1.1)" font-size="7.9" fill="#e8e8e8" text-anchor="start" font-weight="bold">Wall Area</text></g><g clip-path="url(#mk)"><text transform="translate(848.00 565) scale(1 1.1)" font-size="7.9" fill="#e8e8e8" text-anchor="start" font-weight="bold">Width</text></g><g clip-path="url(#mk)"><text transform="translate(892.00 565) scale(1 1.1)" font-size="7.9" fill="#e8e8e8" text-anchor="start" font-weight="bold">Height</text></g><g clip-path="url(#mk)"><text transform="translate(938.00 565) scale(1 1.1)" font-size="7.9" fill="#e8e8e8" text-anchor="start" font-weight="bold">Co</text></g><text transform="translate(44.40 584) scale(1 1.1)" font-size="7.8" fill="#f0f0f0" text-anchor="start" font-weight="bold">Footings (6)</text><text transform="translate(641.60 584) scale(1 1.1)" font-size="7.95" fill="#f0f0f0" text-anchor="end" font-weight="bold">222'-0&quot;</text><text transform="translate(695.70 584) scale(1 1.1)" font-size="7.95" fill="#f0f0f0" text-anchor="end" font-weight="bold">514 sf</text><text transform="translate(750.20 584) scale(1 1.1)" font-size="7.95" fill="#f0f0f0" text-anchor="end" font-weight="bold">164 cu yd</text><text transform="translate(784.00 584) scale(1 1.1)" font-size="7.95" fill="#f0f0f0" text-anchor="end" font-weight="bold">618&quot;</text><text transform="translate(838.30 584) scale(1 1.1)" font-size="7.95" fill="#f0f0f0" text-anchor="end" font-weight="bold">1,909 sf</text><text transform="translate(882.60 584) scale(1 1.1)" font-size="7.95" fill="#f0f0f0" text-anchor="end" font-weight="bold">55'-6&quot;</text><text transform="translate(927.00 584) scale(1 1.1)" font-size="7.95" fill="#f0f0f0" text-anchor="end" font-weight="bold">55'-6&quot;</text><text transform="translate(68.60 599) scale(1 1.1)" font-size="8.4" fill="#e8e8e8" text-anchor="start">Footings</text><text transform="translate(168.00 599) scale(1 1.1)" font-size="8.4" fill="#e8e8e8" text-anchor="start">Footings</text><text transform="translate(369.00 599) scale(1 1.1)" font-size="7.8" fill="#e8e8e8" text-anchor="start">S1.1.2 FOUN...</text><text transform="translate(515.50 599) scale(1 1.1)" font-size="8.2" fill="#e8e8e8" text-anchor="start">jlake</text><text transform="translate(641.60 599) scale(1 1.1)" font-size="8.3" fill="#e4e4e4" text-anchor="end">36'-0&quot;</text><text transform="translate(695.70 599) scale(1 1.1)" font-size="8.3" fill="#e4e4e4" text-anchor="end">81 sf</text><text transform="translate(750.20 599) scale(1 1.1)" font-size="8.3" fill="#e4e4e4" text-anchor="end">24 cu yd</text><text transform="translate(784.00 599) scale(1 1.1)" font-size="8.3" fill="#e4e4e4" text-anchor="end">96&quot;</text><text transform="translate(838.30 599) scale(1 1.1)" font-size="8.3" fill="#e4e4e4" text-anchor="end">288 sf</text><text transform="translate(882.60 599) scale(1 1.1)" font-size="8.3" fill="#e4e4e4" text-anchor="end">9'-0&quot;</text><text transform="translate(927.00 599) scale(1 1.1)" font-size="8.3" fill="#e4e4e4" text-anchor="end">9'-0&quot;</text><text transform="translate(68.60 614) scale(1 1.1)" font-size="8.4" fill="#e8e8e8" text-anchor="start">Footings</text><text transform="translate(168.00 614) scale(1 1.1)" font-size="8.4" fill="#e8e8e8" text-anchor="start">Footings</text><text transform="translate(369.00 614) scale(1 1.1)" font-size="7.8" fill="#e8e8e8" text-anchor="start">S1.1.2 FOUN...</text><text transform="translate(515.50 614) scale(1 1.1)" font-size="8.2" fill="#e8e8e8" text-anchor="start">jlake</text><text transform="translate(641.60 614) scale(1 1.1)" font-size="8.3" fill="#e4e4e4" text-anchor="end">36'-0&quot;</text><text transform="translate(695.70 614) scale(1 1.1)" font-size="8.3" fill="#e4e4e4" text-anchor="end">81 sf</text><text transform="translate(750.20 614) scale(1 1.1)" font-size="8.3" fill="#e4e4e4" text-anchor="end">24 cu yd</text><text transform="translate(784.00 614) scale(1 1.1)" font-size="8.3" fill="#e4e4e4" text-anchor="end">96&quot;</text><text transform="translate(838.30 614) scale(1 1.1)" font-size="8.3" fill="#e4e4e4" text-anchor="end">288 sf</text><text transform="translate(882.60 614) scale(1 1.1)" font-size="8.3" fill="#e4e4e4" text-anchor="end">9'-0&quot;</text><text transform="translate(927.00 614) scale(1 1.1)" font-size="8.3" fill="#e4e4e4" text-anchor="end">9'-0&quot;</text><text transform="translate(68.60 629) scale(1 1.1)" font-size="8.4" fill="#e8e8e8" text-anchor="start">Footings</text><text transform="translate(168.00 629) scale(1 1.1)" font-size="8.4" fill="#e8e8e8" text-anchor="start">Footings</text><text transform="translate(369.00 629) scale(1 1.1)" font-size="7.8" fill="#e8e8e8" text-anchor="start">S1.1.2 FOUN...</text><text transform="translate(515.50 629) scale(1 1.1)" font-size="8.2" fill="#e8e8e8" text-anchor="start">jlake</text><text transform="translate(641.60 629) scale(1 1.1)" font-size="8.3" fill="#e4e4e4" text-anchor="end">36'-0&quot;</text><text transform="translate(695.70 629) scale(1 1.1)" font-size="8.3" fill="#e4e4e4" text-anchor="end">81 sf</text><text transform="translate(750.20 629) scale(1 1.1)" font-size="8.3" fill="#e4e4e4" text-anchor="end">24 cu yd</text><text transform="translate(784.00 629) scale(1 1.1)" font-size="8.3" fill="#e4e4e4" text-anchor="end">96&quot;</text><text transform="translate(838.30 629) scale(1 1.1)" font-size="8.3" fill="#e4e4e4" text-anchor="end">288 sf</text><text transform="translate(882.60 629) scale(1 1.1)" font-size="8.3" fill="#e4e4e4" text-anchor="end">9'-0&quot;</text><text transform="translate(927.00 629) scale(1 1.1)" font-size="8.3" fill="#e4e4e4" text-anchor="end">9'-0&quot;</text><text transform="translate(68.60 644) scale(1 1.1)" font-size="8.4" fill="#e8e8e8" text-anchor="start">Footings</text><text transform="translate(168.00 644) scale(1 1.1)" font-size="8.4" fill="#e8e8e8" text-anchor="start">Footings</text><text transform="translate(369.00 644) scale(1 1.1)" font-size="7.8" fill="#e8e8e8" text-anchor="start">S1.1.2 FOUN...</text><text transform="translate(515.50 644) scale(1 1.1)" font-size="8.2" fill="#e8e8e8" text-anchor="start">jlake</text><text transform="translate(641.60 644) scale(1 1.1)" font-size="8.3" fill="#e4e4e4" text-anchor="end">38'-0&quot;</text><text transform="translate(695.70 644) scale(1 1.1)" font-size="8.3" fill="#e4e4e4" text-anchor="end">90 sf</text><text transform="translate(750.20 644) scale(1 1.1)" font-size="8.3" fill="#e4e4e4" text-anchor="end">31 cu yd</text><text transform="translate(784.00 644) scale(1 1.1)" font-size="8.3" fill="#e4e4e4" text-anchor="end">110&quot;</text><text transform="translate(838.30 644) scale(1 1.1)" font-size="8.3" fill="#e4e4e4" text-anchor="end">348 sf</text><text transform="translate(882.60 644) scale(1 1.1)" font-size="8.3" fill="#e4e4e4" text-anchor="end">9'-6&quot;</text><text transform="translate(927.00 644) scale(1 1.1)" font-size="8.3" fill="#e4e4e4" text-anchor="end">9'-6&quot;</text><text transform="translate(68.60 659) scale(1 1.1)" font-size="8.4" fill="#e8e8e8" text-anchor="start">Footings</text><text transform="translate(168.00 659) scale(1 1.1)" font-size="8.4" fill="#e8e8e8" text-anchor="start">Footings</text><text transform="translate(369.00 659) scale(1 1.1)" font-size="7.8" fill="#e8e8e8" text-anchor="start">S1.1.2 FOUN...</text><text transform="translate(515.50 659) scale(1 1.1)" font-size="8.2" fill="#e8e8e8" text-anchor="start">jlake</text><text transform="translate(641.60 659) scale(1 1.1)" font-size="8.3" fill="#e4e4e4" text-anchor="end">38'-0&quot;</text><text transform="translate(695.70 659) scale(1 1.1)" font-size="8.3" fill="#e4e4e4" text-anchor="end">90 sf</text><text transform="translate(750.20 659) scale(1 1.1)" font-size="8.3" fill="#e4e4e4" text-anchor="end">31 cu yd</text><text transform="translate(784.00 659) scale(1 1.1)" font-size="8.3" fill="#e4e4e4" text-anchor="end">110&quot;</text><text transform="translate(838.30 659) scale(1 1.1)" font-size="8.3" fill="#e4e4e4" text-anchor="end">348 sf</text><text transform="translate(882.60 659) scale(1 1.1)" font-size="8.3" fill="#e4e4e4" text-anchor="end">9'-6&quot;</text><text transform="translate(927.00 659) scale(1 1.1)" font-size="8.3" fill="#e4e4e4" text-anchor="end">9'-6&quot;</text><text transform="translate(68.60 674) scale(1 1.1)" font-size="8.4" fill="#e8e8e8" text-anchor="start">Footings</text><text transform="translate(168.00 674) scale(1 1.1)" font-size="8.4" fill="#e8e8e8" text-anchor="start">Footings</text><text transform="translate(369.00 674) scale(1 1.1)" font-size="7.8" fill="#e8e8e8" text-anchor="start">S1.1.2 FOUN...</text><text transform="translate(515.50 674) scale(1 1.1)" font-size="8.2" fill="#e8e8e8" text-anchor="start">jlake</text><text transform="translate(641.60 674) scale(1 1.1)" font-size="8.3" fill="#e4e4e4" text-anchor="end">38'-0&quot;</text><text transform="translate(695.70 674) scale(1 1.1)" font-size="8.3" fill="#e4e4e4" text-anchor="end">90 sf</text><text transform="translate(750.20 674) scale(1 1.1)" font-size="8.3" fill="#e4e4e4" text-anchor="end">31 cu yd</text><text transform="translate(784.00 674) scale(1 1.1)" font-size="8.3" fill="#e4e4e4" text-anchor="end">110&quot;</text><text transform="translate(838.30 674) scale(1 1.1)" font-size="8.3" fill="#e4e4e4" text-anchor="end">348 sf</text><text transform="translate(882.60 674) scale(1 1.1)" font-size="8.3" fill="#e4e4e4" text-anchor="end">9'-6&quot;</text><text transform="translate(927.00 674) scale(1 1.1)" font-size="8.3" fill="#e4e4e4" text-anchor="end">9'-6&quot;</text></svg>
</body></html>
